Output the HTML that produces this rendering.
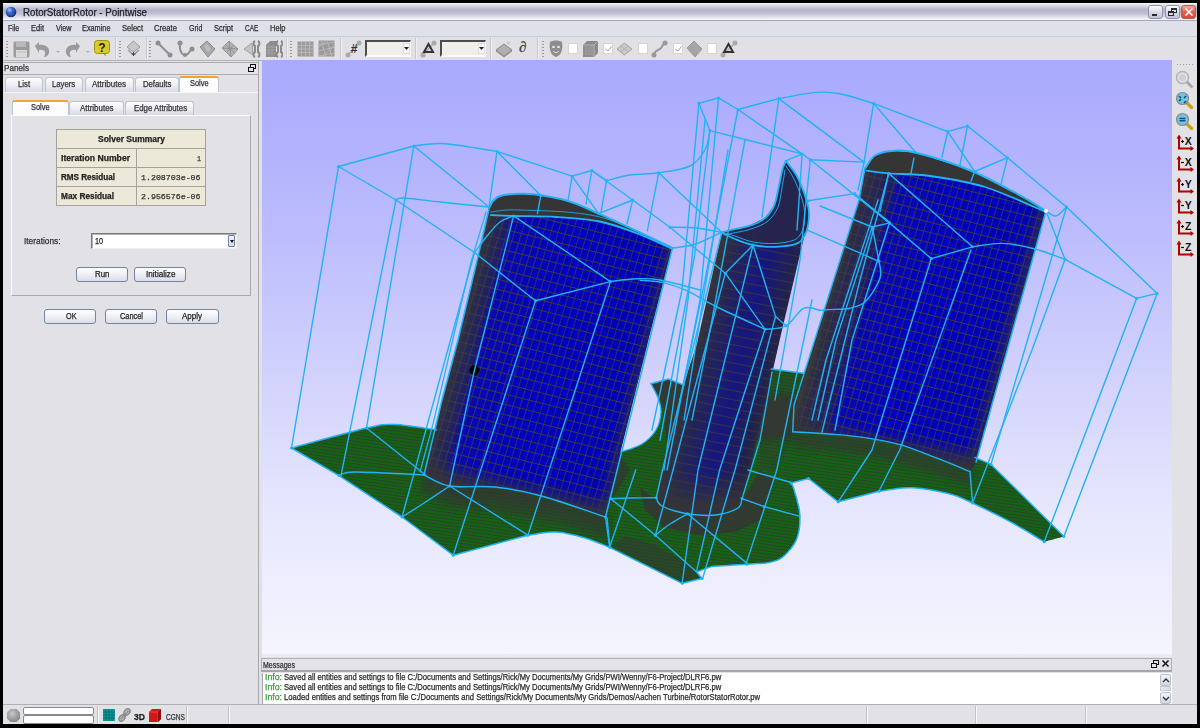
<!DOCTYPE html>
<html><head><meta charset="utf-8"><style>
*{margin:0;padding:0;box-sizing:border-box}
html,body{width:1200px;height:728px;overflow:hidden;background:#000;font-family:"Liberation Sans",sans-serif;font-size:11px;color:#000}
.a{position:absolute}
.t{position:absolute;white-space:nowrap;line-height:1;transform-origin:0 0;-webkit-text-stroke:0.25px currentColor}
.sep{position:absolute;width:2px;border-left:1px solid #c8c8ce;border-right:1px solid #f0f0f3}
.grip{position:absolute;width:2px;background:repeating-linear-gradient(#9a9a9a 0 1px,transparent 1px 3px)}
.tab{position:absolute;background:linear-gradient(#fdfdfe,#eeeef4 50%,#d9d9e5);border:1px solid #b9c5cc;border-bottom:none;border-radius:3px 3px 0 0}
.tab.sel{background:#fcfcfe;border-top:2px solid #f2a628}
.btn{position:absolute;background:linear-gradient(#ffffff,#f3f3f7 40%,#dcdce8);border:1px solid #7185a2;border-radius:3px}
.cb{position:absolute;width:10px;height:11px;background:#fff;border:1px solid #d6d4ca}
</style></head><body>
<div class="a" style="left:3px;top:3px;width:1194px;height:721px;background:#e2e1e6"></div>
<div class="a" style="left:3px;top:3px;width:1194px;height:17px;background:linear-gradient(#f7f7fb 0%,#dadae5 15%,#b5b4ca 40%,#c0bfd3 62%,#e4e4ee 85%,#f7f7fb 100%)"></div>
<div class="a" style="left:3px;top:20px;width:1194px;height:1px;background:#a7a6ba"></div>
<svg class="a" style="left:4px;top:5px" width="14" height="14" viewBox="0 0 14 14"><defs><radialGradient id="gl" cx="35%" cy="30%" r="75%"><stop offset="0" stop-color="#a8c8ff"/><stop offset=".4" stop-color="#3163c8"/><stop offset="1" stop-color="#0c2778"/></radialGradient></defs><circle cx="7" cy="7" r="5.3" fill="url(#gl)"/><path d="M3 6h8M3.5 9h7M7 2v10" stroke="#6d92dd" stroke-width=".5" fill="none" opacity=".7"/></svg>
<div class="a" style="left:1148px;top:5px;width:15px;height:14px;border:1px solid #8f91aa;border-radius:3px;background:linear-gradient(#fcfcfe,#d6d7e4 55%,#c3c4d6)"><div class="a" style="left:3px;top:8px;width:5px;height:2px;background:#2a2a2a"></div></div>
<div class="a" style="left:1165px;top:5px;width:15px;height:14px;border:1px solid #8f91aa;border-radius:3px;background:linear-gradient(#fcfcfe,#d6d7e4 55%,#c3c4d6)"><div class="a" style="left:5px;top:2px;width:6px;height:5px;border:1px solid #2a2a2a;border-top-width:2px"></div><div class="a" style="left:2px;top:5px;width:6px;height:5px;border:1px solid #2a2a2a;border-top-width:2px;background:#d8d9e6"></div></div>
<div class="a" style="left:1181px;top:5px;width:15px;height:14px;border:1px solid #b65a4f;border-radius:3px;background:linear-gradient(#f2ab9e,#e06655 45%,#d24c3c)"><svg class="a" style="left:2px;top:1px" width="10" height="10"><path d="M1.5 1.5L8.5 8.5M8.5 1.5L1.5 8.5" stroke="#fff" stroke-width="1.5"/></svg></div>
<div class="a" style="left:3px;top:21px;width:1194px;height:15px;background:#dfe1ea"></div>
<div class="a" style="left:3px;top:36px;width:1194px;height:1px;background:#cacad2"></div>
<div class="a" style="left:3px;top:37px;width:1194px;height:23px;background:#e1e0e5"></div>
<div class="a" style="left:3px;top:60px;width:1194px;height:1px;background:#b3b3b8"></div>
<div class="sep" style="left:115px;top:38px;height:21px"></div>
<div class="sep" style="left:145.5px;top:38px;height:21px"></div>
<div class="sep" style="left:286px;top:38px;height:21px"></div>
<div class="sep" style="left:340px;top:38px;height:21px"></div>
<div class="sep" style="left:415px;top:38px;height:21px"></div>
<div class="sep" style="left:490px;top:38px;height:21px"></div>
<div class="sep" style="left:537px;top:38px;height:21px"></div>
<div class="grip" style="left:6px;top:41px;height:16px"></div>
<div class="grip" style="left:119px;top:41px;height:16px"></div>
<div class="grip" style="left:149px;top:41px;height:16px"></div>
<div class="grip" style="left:290px;top:41px;height:16px"></div>
<div class="grip" style="left:542px;top:41px;height:16px"></div>
<svg class="a" style="left:13px;top:41px" width="17" height="17" viewBox="0 0 17 17"><rect x="0.5" y="0.5" width="16" height="16" rx="1.5" fill="#9a9a9a"/><rect x="3" y="1" width="10" height="5" fill="#b8b8b8"/><rect x="3" y="9" width="11" height="7" fill="#dadada"/><rect x="4" y="10.5" width="9" height="1" fill="#bbb"/></svg>
<svg class="a" style="left:33px;top:41px" width="19" height="17" viewBox="0 0 19 17"><path d="M2 5 L6 1 V4 C13 3 17 7 16 12 C15 15 13 16 11 16 C13 13 13 8 6 9 V12 Z" fill="#9a9a9a"/></svg>
<svg class="a" style="left:56px;top:51px" width="4" height="3" viewBox="0 0 4 3"><path d="M0 0h4l-2 2z" fill="#aaa"/></svg>
<svg class="a" style="left:63px;top:41px" width="19" height="17" viewBox="0 0 19 17"><path d="M17 5 L13 1 V4 C6 3 2 7 3 12 C4 15 6 16 8 16 C6 13 6 8 13 9 V12 Z" fill="#9a9a9a"/></svg>
<svg class="a" style="left:86px;top:51px" width="4" height="3" viewBox="0 0 4 3"><path d="M0 0h4l-2 2z" fill="#aaa"/></svg>
<svg class="a" style="left:94px;top:40px" width="16" height="17" viewBox="0 0 16 17"><rect x="0.5" y="0.5" width="15" height="13" rx="3" fill="#d9cc2a" stroke="#9b8f14"/><path d="M9 13.5 L12 16.5 L11 13z" fill="#9b8f14"/><text x="8" y="11.5" font-family="Liberation Sans" font-weight="bold" font-size="12" text-anchor="middle" fill="#1e1a00">?</text></svg>
<svg class="a" style="left:126px;top:40px" width="15" height="18" viewBox="0 0 15 18"><path d="M7.5 1 L14 7 L7.5 12 L1 7z" fill="#c8c8c8" stroke="#9a9a9a"/><path d="M2 10 L7.5 15 L13 10" fill="none" stroke="#9a9a9a" stroke-width="1.5"/><path d="M7.5 12v4M5.5 14h4" stroke="#444" stroke-width="1"/></svg>
<svg class="a" style="left:155px;top:40px" width="18" height="18" viewBox="0 0 18 18"><path d="M3 3 L15 15" stroke="#8e8e8e" stroke-width="2"/><circle cx="3" cy="3" r="2.5" fill="#8e8e8e"/><circle cx="15" cy="15" r="2.5" fill="#8e8e8e"/></svg>
<svg class="a" style="left:177px;top:40px" width="18" height="18" viewBox="0 0 18 18"><path d="M3 3 C2 12 6 16 9 15 C12 14 13 10 15 9" stroke="#8e8e8e" stroke-width="2" fill="none"/><circle cx="3" cy="3" r="2.5" fill="#8e8e8e"/><circle cx="15" cy="9" r="2.5" fill="#8e8e8e"/><circle cx="8" cy="15" r="2" fill="#8e8e8e"/></svg>
<svg class="a" style="left:199px;top:40px" width="17" height="18" viewBox="0 0 17 18"><path d="M1 7 L8 1 L16 9 L9 17z" fill="#a8a8a8" stroke="#8a8a8a"/><path d="M5 7 L8 4 L12 9 L9 12z" fill="#bdbdbd"/></svg>
<svg class="a" style="left:221px;top:40px" width="18" height="18" viewBox="0 0 18 18"><path d="M1 8 L8 1 L17 9 L10 17z" fill="#b5b5b5" stroke="#909090"/><path d="M4.5 4.5 L13.5 13 M8 1 L10 17 M12.5 5 L5.5 12.5 M1 8 L17 9" stroke="#909090" stroke-width="1"/></svg>
<svg class="a" style="left:243px;top:40px" width="18" height="18" viewBox="0 0 18 18"><path d="M1 9 L9 3 L10 15z" fill="#c6c6c6" stroke="#a0a0a0"/><path d="M12 1 C10 2 10 5 12 6 V12 C10 13 10 16 12 17 M15 1 C17 2 17 5 15 6 V12 C17 13 17 16 15 17" stroke="#8a8a8a" stroke-width="2" fill="none"/></svg>
<svg class="a" style="left:265px;top:40px" width="18" height="18" viewBox="0 0 18 18"><path d="M1 5 L5 1 H11 V17 H1z" fill="#8c8c8c"/><path d="M1 7h10M1 10h10M1 13h10M4 5v12M7 5v12" stroke="#a9a9a9" stroke-width=".8"/><path d="M13 1 C11 2 11 5 13 6 V12 C11 13 11 16 13 17 M16 1 C18 2 18 5 16 6 V12 C18 13 18 16 16 17" stroke="#8a8a8a" stroke-width="2" fill="none"/></svg>
<svg class="a" style="left:297px;top:41px" width="17" height="16" viewBox="0 0 17 16"><rect x=".5" y=".5" width="16" height="15" fill="#9c9c9c"/><path d="M4.5 0v16M8.5 0v16M12.5 0v16M0 4.5h17M0 8h17M0 11.5h17" stroke="#b6b6b6" stroke-width="1"/></svg>
<svg class="a" style="left:318px;top:40px" width="17" height="17" viewBox="0 0 17 17"><rect x=".5" y=".5" width="16" height="16" fill="#9a9a9a"/><path d="M0 5L17 2M0 11L17 7M0 16L17 13M3 0L8 17M9 0L14 17M0 8L9 0M4 17L17 5" stroke="#bababa" stroke-width=".9"/></svg>
<svg class="a" style="left:345px;top:40px" width="17" height="18" viewBox="0 0 17 18"><circle cx="14" cy="3" r="2.5" fill="#aaa"/><circle cx="3" cy="15" r="2.5" fill="#aaa"/><path d="M3 15L14 3" stroke="#aaa" stroke-width="1.5"/><text x="9" y="13" font-family="Liberation Sans" font-weight="bold" font-size="12" text-anchor="middle" fill="#333">#</text></svg>
<div class="a" style="left:365px;top:40px;width:46px;height:17px;background:#efeee9;border:2px solid #4d4d4d;border-right:1px solid #f7f7f7;border-bottom:2px solid #fafafa"><div class="a" style="left:36px;top:1px;width:7px;height:11px;background:#f7f7f7;border:1px solid #ddd"></div><svg class="a" style="left:37px;top:5px" width="5" height="3"><path d="M0 0h5l-2.5 3z" fill="#222"/></svg></div>
<svg class="a" style="left:420px;top:40px" width="17" height="18" viewBox="0 0 17 18"><circle cx="14" cy="3" r="2.5" fill="#aaa"/><circle cx="3" cy="15" r="2.5" fill="#aaa"/><path d="M3 15L14 3" stroke="#aaa" stroke-width="1.5"/><path d="M8.5 4 L13 12 H4z" fill="none" stroke="#333" stroke-width="2"/></svg>
<div class="a" style="left:440px;top:40px;width:46px;height:17px;background:#efeee9;border:2px solid #4d4d4d;border-right:1px solid #f7f7f7;border-bottom:2px solid #fafafa"><div class="a" style="left:36px;top:1px;width:7px;height:11px;background:#f7f7f7;border:1px solid #ddd"></div><svg class="a" style="left:37px;top:5px" width="5" height="3"><path d="M0 0h5l-2.5 3z" fill="#222"/></svg></div>
<svg class="a" style="left:495px;top:40px" width="18" height="18" viewBox="0 0 18 18"><path d="M1 10 L9 4 L17 10 L9 16z" fill="#b0b0b0" stroke="#8a8a8a"/><path d="M1 11 L9 17 L17 11" fill="none" stroke="#8a8a8a"/><path d="M12 1 L14 5 M16 2 L12 4" stroke="#c0c0c0"/></svg>
<div class="t" style="left:519px;top:40px;font-size:15px;font-style:italic;font-family:'Liberation Serif';color:#3a3a3a;font-weight:bold">&#8706;</div>
<svg class="a" style="left:548px;top:40px" width="16" height="18" viewBox="0 0 16 18"><path d="M2 2 C5 0 11 0 14 2 C15 8 14 15 8 17 C2 15 1 8 2 2z" fill="#8d8d8d"/><ellipse cx="5.5" cy="7" rx="1.5" ry="1" fill="#eee"/><ellipse cx="10.5" cy="7" rx="1.5" ry="1" fill="#eee"/><path d="M5 11 C7 13 9 13 11 11" stroke="#eee" fill="none"/></svg>
<div class="cb" style="left:568px;top:43px"></div>
<svg class="a" style="left:582px;top:40px" width="17" height="18" viewBox="0 0 17 18"><path d="M1 5 L5 1 H16 V13 L12 17 H1z" fill="#8a8a8a"/><path d="M1 5H12V17M12 5L16 1" stroke="#b5b5b5" fill="none"/><path d="M1 8h11M1 11h11M1 14h11M4 5v12M7 5v12M10 5v12" stroke="#a5a5a5" stroke-width=".7"/></svg>
<div class="cb" style="left:603px;top:43px"><svg class="a" style="left:1px;top:2px" width="7" height="6"><path d="M.5 3L3 5L6.5 .5" stroke="#999" fill="none"/></svg></div>
<svg class="a" style="left:616px;top:42px" width="17" height="14" viewBox="0 0 17 14"><path d="M1 7 L8.5 1 L16 7 L8.5 13z" fill="#c9c9c9" stroke="#a5a5a5"/><path d="M4.75 4 L12.25 10 M12.25 4 L4.75 10" stroke="#b0b0b0"/></svg>
<div class="cb" style="left:638px;top:43px"></div>
<svg class="a" style="left:651px;top:40px" width="17" height="18" viewBox="0 0 17 18"><path d="M3 15 C4 9 8 11 10 8 C11 6 12 4 14 3" stroke="#999" stroke-width="2" fill="none"/><circle cx="14" cy="3" r="2.5" fill="#999"/><circle cx="3" cy="15" r="2.5" fill="#999"/></svg>
<div class="cb" style="left:673px;top:43px"><svg class="a" style="left:1px;top:2px" width="7" height="6"><path d="M.5 3L3 5L6.5 .5" stroke="#999" fill="none"/></svg></div>
<svg class="a" style="left:686px;top:40px" width="17" height="18" viewBox="0 0 17 18"><path d="M1 8 L8 1 L16 9 L9 17z" fill="#a5a5a5" stroke="#999"/></svg>
<div class="cb" style="left:707px;top:43px"></div>
<svg class="a" style="left:720px;top:40px" width="18" height="18" viewBox="0 0 18 18"><circle cx="15" cy="3" r="2.5" fill="#aaa"/><circle cx="3" cy="15" r="2.5" fill="#aaa"/><path d="M3 15L15 3" stroke="#aaa" stroke-width="1.5"/><path d="M8.5 4 L13 12 H4z" fill="none" stroke="#333" stroke-width="2"/></svg>
<div class="a" style="left:3px;top:61px;width:255px;height:643px;background:#e2e1e6"></div>
<div class="a" style="left:258px;top:61px;width:1px;height:643px;background:#a9a9ad"></div>
<div class="a" style="left:3px;top:62px;width:256px;height:13px;border:1px solid #acacb0;border-left:none;background:#e4e3e8"></div>
<svg class="a" style="left:248px;top:64px" width="8" height="8" viewBox="0 0 8 8"><rect x="2.5" y=".5" width="5" height="4" fill="none" stroke="#111"/><rect x=".5" y="3.5" width="5" height="4" fill="#e4e3e8" stroke="#111"/></svg>
<div class="tab" style="left:4.5px;top:77px;width:38.5px;height:15px"></div>
<div class="tab" style="left:44.5px;top:77px;width:38.5px;height:15px"></div>
<div class="tab" style="left:84.5px;top:77px;width:49.5px;height:15px"></div>
<div class="tab" style="left:135px;top:77px;width:43.5px;height:15px"></div>
<div class="tab sel" style="left:178.5px;top:76px;width:40px;height:17px"></div>
<div class="a" style="left:4px;top:92px;width:254px;height:612px;border-top:1px solid #f6f6f8"></div>
<div class="tab" style="left:69px;top:101px;width:55px;height:14px"></div>
<div class="tab" style="left:125px;top:101px;width:69px;height:14px"></div>
<div class="tab sel" style="left:12px;top:100px;width:57px;height:16px"></div>
<div class="a" style="left:11px;top:115px;width:240px;height:181px;border-left:1px solid #fafafa;border-top:1px solid #fafafa;border-right:1px solid #a9a9ad;border-bottom:1px solid #a9a9ad"></div>
<div class="a" style="left:56px;top:129px;width:150px;height:77px;background:#ece9d8;border:1px solid #a3a39d"></div>
<div class="a" style="left:57px;top:148px;width:148px;height:1px;background:#a3a39d"></div>
<div class="a" style="left:57px;top:167px;width:148px;height:1px;background:#a3a39d"></div>
<div class="a" style="left:57px;top:186px;width:148px;height:1px;background:#a3a39d"></div>
<div class="a" style="left:136px;top:148px;width:1px;height:58px;background:#a3a39d"></div>
<div class="a" style="left:91px;top:233px;width:146px;height:16px;background:#fff;border:1px solid #7a7a7a;border-right-color:#eee;border-bottom-color:#eee;box-shadow:inset 1px 1px 0 #b0b0b0"></div>
<div class="a" style="left:228px;top:235px;width:7px;height:12px;background:linear-gradient(#f4f5fb,#d8dbe8);border:1px solid #6f7f9a;border-radius:1px"><svg class="a" style="left:1px;top:4px" width="4" height="3"><path d="M0 0h4l-2 3z" fill="#111"/></svg></div>
<div class="btn" style="left:76px;top:266.5px;width:52px;height:15.5px"></div>
<div class="btn" style="left:134px;top:266.5px;width:52px;height:15.5px"></div>
<div class="btn" style="left:44px;top:308.5px;width:52px;height:15.5px"></div>
<div class="btn" style="left:105px;top:308.5px;width:52px;height:15.5px"></div>
<div class="btn" style="left:166px;top:308.5px;width:52.5px;height:15.5px"></div>
<div class="a" style="left:262px;top:60px;width:910px;height:594px;background:linear-gradient(#a9a9fe 0%,#b9b9fd 25%,#cfcffd 50%,#e6e6fe 75%,#f5f5fe 100%)"></div>
<svg class="a" style="left:262px;top:60px" width="910" height="594" viewBox="262 60 910 594"><defs>
<pattern id="gridB" patternUnits="userSpaceOnUse" width="7" height="10" patternTransform="matrix(0.97 0.242 -0.29 0.957 0 0)"><path d="M0 0.5H7" stroke="#3e3a3a" stroke-width="1" opacity="0.95"/><path d="M0.45 0V10" stroke="#3e3e4e" stroke-width="0.85" opacity="0.85"/></pattern>
<pattern id="gridS" patternUnits="userSpaceOnUse" width="5" height="9" patternTransform="rotate(11)"><path d="M0 0.4H5" stroke="#3a3a3a" stroke-width="1" opacity="0.9"/></pattern>
<pattern id="gridG" patternUnits="userSpaceOnUse" width="9" height="3.2" patternTransform="rotate(8)"><path d="M0 0.5H9" stroke="#333" stroke-width="1" opacity="0.7"/></pattern>
<linearGradient id="bl1" gradientUnits="userSpaceOnUse" x1="423" y1="475" x2="609" y2="521.5"><stop offset="0" stop-color="#363636"/><stop offset="0.035" stop-color="#2c2c48"/><stop offset="0.1" stop-color="#1e1e6a"/><stop offset="0.14" stop-color="#0808b0"/><stop offset="0.5" stop-color="#0000c0"/><stop offset="0.9" stop-color="#0000b6"/><stop offset="1" stop-color="#2c2c50"/></linearGradient>
<linearGradient id="bl2" gradientUnits="userSpaceOnUse" x1="690" y1="360" x2="785" y2="384"><stop offset="0" stop-color="#363636"/><stop offset="0.2" stop-color="#24245a"/><stop offset="0.5" stop-color="#161680"/><stop offset="0.8" stop-color="#22224c"/><stop offset="1" stop-color="#363636"/></linearGradient>
<linearGradient id="bl3" gradientUnits="userSpaceOnUse" x1="829" y1="300" x2="1011" y2="350"><stop offset="0" stop-color="#363636"/><stop offset="0.03" stop-color="#2c2c48"/><stop offset="0.16" stop-color="#1e1e66"/><stop offset="0.2" stop-color="#0808b0"/><stop offset="0.5" stop-color="#0000c0"/><stop offset="0.9" stop-color="#0000b6"/><stop offset="1" stop-color="#2c2c50"/></linearGradient>
<linearGradient id="bot1" gradientUnits="userSpaceOnUse" x1="519" y1="474" x2="514" y2="497"><stop offset="0" stop-color="#353535" stop-opacity="0"/><stop offset="1" stop-color="#353535" stop-opacity="0.95"/></linearGradient>
<linearGradient id="bot3" gradientUnits="userSpaceOnUse" x1="884" y1="428" x2="880" y2="451"><stop offset="0" stop-color="#353535" stop-opacity="0"/><stop offset="1" stop-color="#353535" stop-opacity="0.95"/></linearGradient>
<linearGradient id="bot2" gradientUnits="userSpaceOnUse" x1="0" y1="470" x2="0" y2="505"><stop offset="0" stop-color="#353535" stop-opacity="0"/><stop offset="1" stop-color="#353535" stop-opacity="0.9"/></linearGradient>
<filter id="fb" x="-10%" y="-10%" width="120%" height="120%"><feGaussianBlur stdDeviation="3"/></filter>
</defs>
<path d="M291.5,448.0 L291.5,448.0 L297.6,446.3 L306.1,444.0 L316.2,441.2 L327.2,438.2 L338.5,435.2 L349.3,432.3 L358.8,429.8 L366.5,428.0 L372.2,426.7 L376.6,425.8 L380.0,425.1 L382.8,424.7 L385.4,424.4 L388.0,424.4 L391.1,424.4 L395.0,424.5 L399.9,424.8 L405.5,425.4 L411.5,426.1 L417.6,427.0 L423.5,427.9 L428.8,428.8 L433.3,429.5 L436.6,430.0 L470.0,440.0 L600.0,446.0 L621.0,452.0 L622.7,451.4 L624.9,450.7 L627.6,449.8 L630.6,448.9 L633.7,447.8 L636.8,446.6 L639.6,445.3 L642.0,444.0 L644.1,442.6 L646.2,441.0 L648.2,439.4 L650.0,437.6 L651.7,435.8 L653.3,433.9 L654.7,432.0 L656.0,430.0 L657.1,427.9 L658.1,425.7 L658.9,423.4 L659.6,421.0 L660.1,418.6 L660.5,416.3 L660.8,414.1 L661.0,412.0 L661.0,410.1 L660.9,408.2 L660.6,406.5 L660.2,404.8 L659.8,403.1 L659.2,401.4 L658.6,399.7 L658.0,398.0 L657.3,396.1 L656.4,394.1 L655.4,392.0 L654.3,390.0 L653.3,388.0 L652.4,386.3 L651.6,384.8 L651.0,383.7 L668.5,379.0 L684.3,385.3 L720.0,390.0 L760.0,378.0 L771.2,369.0 L803.2,373.3 L830.0,410.0 L960.0,440.0 L974.8,457.4 L991.0,464.4 L1063.9,536.4 L1044.2,541.8 L1044.2,541.8 L1041.5,540.2 L1038.0,538.1 L1033.8,535.5 L1029.2,532.7 L1024.2,529.7 L1019.2,526.8 L1014.2,523.9 L1009.5,521.3 L1004.7,518.8 L999.5,516.1 L994.2,513.5 L988.8,510.9 L983.8,508.4 L979.2,506.2 L975.4,504.4 L972.5,503.0 L970.9,502.3 L968.8,501.3 L966.4,500.2 L963.6,498.9 L960.6,497.6 L957.3,496.3 L953.7,495.1 L950.0,494.0 L945.9,493.0 L941.4,492.0 L936.6,491.0 L931.5,490.1 L926.4,489.3 L921.3,488.6 L916.4,488.1 L911.8,487.8 L907.2,487.8 L902.5,488.1 L897.7,488.6 L893.0,489.2 L888.7,489.8 L884.8,490.4 L881.5,491.0 L879.0,491.3 L838.2,501.8 L808.6,478.5 L791.0,482.9 L791.2,483.4 L791.5,483.9 L791.9,484.5 L792.3,485.2 L792.8,486.1 L793.2,487.3 L793.8,488.7 L794.3,490.5 L794.9,492.7 L795.7,495.4 L796.6,498.4 L797.4,501.6 L798.2,505.0 L799.0,508.3 L799.5,511.6 L799.8,514.7 L799.9,517.7 L799.9,520.7 L799.8,523.8 L799.5,526.8 L799.1,529.8 L798.5,532.6 L797.8,535.4 L797.0,538.0 L796.0,540.5 L794.7,542.9 L793.3,545.3 L791.7,547.5 L790.0,549.6 L788.3,551.6 L786.6,553.4 L785.0,555.0 L783.4,556.4 L781.9,557.6 L780.4,558.6 L778.9,559.4 L777.2,560.2 L775.4,560.8 L773.4,561.4 L771.2,562.0 L768.7,562.5 L766.1,562.9 L763.4,563.2 L760.4,563.4 L757.3,563.6 L754.1,563.8 L750.6,564.0 L747.0,564.2 L742.9,564.5 L738.2,564.8 L733.1,565.1 L727.9,565.4 L723.0,565.7 L718.5,566.0 L714.7,566.2 L711.9,566.4 L696.5,571.9 L702.0,578.5 L682.2,583.3 L609.7,547.3 L609.7,547.3 L607.6,546.5 L604.9,545.4 L601.7,544.1 L598.1,542.7 L594.3,541.2 L590.4,539.8 L586.6,538.5 L583.0,537.4 L579.6,536.5 L576.2,535.5 L572.7,534.7 L569.2,533.9 L565.8,533.2 L562.3,532.6 L558.9,532.2 L555.4,532.0 L551.8,532.0 L547.9,532.3 L543.9,532.7 L539.9,533.3 L536.2,533.9 L532.8,534.4 L530.0,534.9 L527.9,535.2 L453.2,555.2 L402.0,517.0 L339.0,475.6 Z" fill="#146314" />
<path d="M291.5,448.0 L291.5,448.0 L297.6,446.3 L306.1,444.0 L316.2,441.2 L327.2,438.2 L338.5,435.2 L349.3,432.3 L358.8,429.8 L366.5,428.0 L372.2,426.7 L376.6,425.8 L380.0,425.1 L382.8,424.7 L385.4,424.4 L388.0,424.4 L391.1,424.4 L395.0,424.5 L399.9,424.8 L405.5,425.4 L411.5,426.1 L417.6,427.0 L423.5,427.9 L428.8,428.8 L433.3,429.5 L436.6,430.0 L470.0,440.0 L600.0,446.0 L621.0,452.0 L622.7,451.4 L624.9,450.7 L627.6,449.8 L630.6,448.9 L633.7,447.8 L636.8,446.6 L639.6,445.3 L642.0,444.0 L644.1,442.6 L646.2,441.0 L648.2,439.4 L650.0,437.6 L651.7,435.8 L653.3,433.9 L654.7,432.0 L656.0,430.0 L657.1,427.9 L658.1,425.7 L658.9,423.4 L659.6,421.0 L660.1,418.6 L660.5,416.3 L660.8,414.1 L661.0,412.0 L661.0,410.1 L660.9,408.2 L660.6,406.5 L660.2,404.8 L659.8,403.1 L659.2,401.4 L658.6,399.7 L658.0,398.0 L657.3,396.1 L656.4,394.1 L655.4,392.0 L654.3,390.0 L653.3,388.0 L652.4,386.3 L651.6,384.8 L651.0,383.7 L668.5,379.0 L684.3,385.3 L720.0,390.0 L760.0,378.0 L771.2,369.0 L803.2,373.3 L830.0,410.0 L960.0,440.0 L974.8,457.4 L991.0,464.4 L1063.9,536.4 L1044.2,541.8 L1044.2,541.8 L1041.5,540.2 L1038.0,538.1 L1033.8,535.5 L1029.2,532.7 L1024.2,529.7 L1019.2,526.8 L1014.2,523.9 L1009.5,521.3 L1004.7,518.8 L999.5,516.1 L994.2,513.5 L988.8,510.9 L983.8,508.4 L979.2,506.2 L975.4,504.4 L972.5,503.0 L970.9,502.3 L968.8,501.3 L966.4,500.2 L963.6,498.9 L960.6,497.6 L957.3,496.3 L953.7,495.1 L950.0,494.0 L945.9,493.0 L941.4,492.0 L936.6,491.0 L931.5,490.1 L926.4,489.3 L921.3,488.6 L916.4,488.1 L911.8,487.8 L907.2,487.8 L902.5,488.1 L897.7,488.6 L893.0,489.2 L888.7,489.8 L884.8,490.4 L881.5,491.0 L879.0,491.3 L838.2,501.8 L808.6,478.5 L791.0,482.9 L791.2,483.4 L791.5,483.9 L791.9,484.5 L792.3,485.2 L792.8,486.1 L793.2,487.3 L793.8,488.7 L794.3,490.5 L794.9,492.7 L795.7,495.4 L796.6,498.4 L797.4,501.6 L798.2,505.0 L799.0,508.3 L799.5,511.6 L799.8,514.7 L799.9,517.7 L799.9,520.7 L799.8,523.8 L799.5,526.8 L799.1,529.8 L798.5,532.6 L797.8,535.4 L797.0,538.0 L796.0,540.5 L794.7,542.9 L793.3,545.3 L791.7,547.5 L790.0,549.6 L788.3,551.6 L786.6,553.4 L785.0,555.0 L783.4,556.4 L781.9,557.6 L780.4,558.6 L778.9,559.4 L777.2,560.2 L775.4,560.8 L773.4,561.4 L771.2,562.0 L768.7,562.5 L766.1,562.9 L763.4,563.2 L760.4,563.4 L757.3,563.6 L754.1,563.8 L750.6,564.0 L747.0,564.2 L742.9,564.5 L738.2,564.8 L733.1,565.1 L727.9,565.4 L723.0,565.7 L718.5,566.0 L714.7,566.2 L711.9,566.4 L696.5,571.9 L702.0,578.5 L682.2,583.3 L609.7,547.3 L609.7,547.3 L607.6,546.5 L604.9,545.4 L601.7,544.1 L598.1,542.7 L594.3,541.2 L590.4,539.8 L586.6,538.5 L583.0,537.4 L579.6,536.5 L576.2,535.5 L572.7,534.7 L569.2,533.9 L565.8,533.2 L562.3,532.6 L558.9,532.2 L555.4,532.0 L551.8,532.0 L547.9,532.3 L543.9,532.7 L539.9,533.3 L536.2,533.9 L532.8,534.4 L530.0,534.9 L527.9,535.2 L453.2,555.2 L402.0,517.0 L339.0,475.6 Z" fill="url(#gridG)" />
<clipPath id="cfl"><path d="M291.5,448.0 L291.5,448.0 L297.6,446.3 L306.1,444.0 L316.2,441.2 L327.2,438.2 L338.5,435.2 L349.3,432.3 L358.8,429.8 L366.5,428.0 L372.2,426.7 L376.6,425.8 L380.0,425.1 L382.8,424.7 L385.4,424.4 L388.0,424.4 L391.1,424.4 L395.0,424.5 L399.9,424.8 L405.5,425.4 L411.5,426.1 L417.6,427.0 L423.5,427.9 L428.8,428.8 L433.3,429.5 L436.6,430.0 L470.0,440.0 L600.0,446.0 L621.0,452.0 L622.7,451.4 L624.9,450.7 L627.6,449.8 L630.6,448.9 L633.7,447.8 L636.8,446.6 L639.6,445.3 L642.0,444.0 L644.1,442.6 L646.2,441.0 L648.2,439.4 L650.0,437.6 L651.7,435.8 L653.3,433.9 L654.7,432.0 L656.0,430.0 L657.1,427.9 L658.1,425.7 L658.9,423.4 L659.6,421.0 L660.1,418.6 L660.5,416.3 L660.8,414.1 L661.0,412.0 L661.0,410.1 L660.9,408.2 L660.6,406.5 L660.2,404.8 L659.8,403.1 L659.2,401.4 L658.6,399.7 L658.0,398.0 L657.3,396.1 L656.4,394.1 L655.4,392.0 L654.3,390.0 L653.3,388.0 L652.4,386.3 L651.6,384.8 L651.0,383.7 L668.5,379.0 L684.3,385.3 L720.0,390.0 L760.0,378.0 L771.2,369.0 L803.2,373.3 L830.0,410.0 L960.0,440.0 L974.8,457.4 L991.0,464.4 L1063.9,536.4 L1044.2,541.8 L1044.2,541.8 L1041.5,540.2 L1038.0,538.1 L1033.8,535.5 L1029.2,532.7 L1024.2,529.7 L1019.2,526.8 L1014.2,523.9 L1009.5,521.3 L1004.7,518.8 L999.5,516.1 L994.2,513.5 L988.8,510.9 L983.8,508.4 L979.2,506.2 L975.4,504.4 L972.5,503.0 L970.9,502.3 L968.8,501.3 L966.4,500.2 L963.6,498.9 L960.6,497.6 L957.3,496.3 L953.7,495.1 L950.0,494.0 L945.9,493.0 L941.4,492.0 L936.6,491.0 L931.5,490.1 L926.4,489.3 L921.3,488.6 L916.4,488.1 L911.8,487.8 L907.2,487.8 L902.5,488.1 L897.7,488.6 L893.0,489.2 L888.7,489.8 L884.8,490.4 L881.5,491.0 L879.0,491.3 L838.2,501.8 L808.6,478.5 L791.0,482.9 L791.2,483.4 L791.5,483.9 L791.9,484.5 L792.3,485.2 L792.8,486.1 L793.2,487.3 L793.8,488.7 L794.3,490.5 L794.9,492.7 L795.7,495.4 L796.6,498.4 L797.4,501.6 L798.2,505.0 L799.0,508.3 L799.5,511.6 L799.8,514.7 L799.9,517.7 L799.9,520.7 L799.8,523.8 L799.5,526.8 L799.1,529.8 L798.5,532.6 L797.8,535.4 L797.0,538.0 L796.0,540.5 L794.7,542.9 L793.3,545.3 L791.7,547.5 L790.0,549.6 L788.3,551.6 L786.6,553.4 L785.0,555.0 L783.4,556.4 L781.9,557.6 L780.4,558.6 L778.9,559.4 L777.2,560.2 L775.4,560.8 L773.4,561.4 L771.2,562.0 L768.7,562.5 L766.1,562.9 L763.4,563.2 L760.4,563.4 L757.3,563.6 L754.1,563.8 L750.6,564.0 L747.0,564.2 L742.9,564.5 L738.2,564.8 L733.1,565.1 L727.9,565.4 L723.0,565.7 L718.5,566.0 L714.7,566.2 L711.9,566.4 L696.5,571.9 L702.0,578.5 L682.2,583.3 L609.7,547.3 L609.7,547.3 L607.6,546.5 L604.9,545.4 L601.7,544.1 L598.1,542.7 L594.3,541.2 L590.4,539.8 L586.6,538.5 L583.0,537.4 L579.6,536.5 L576.2,535.5 L572.7,534.7 L569.2,533.9 L565.8,533.2 L562.3,532.6 L558.9,532.2 L555.4,532.0 L551.8,532.0 L547.9,532.3 L543.9,532.7 L539.9,533.3 L536.2,533.9 L532.8,534.4 L530.0,534.9 L527.9,535.2 L453.2,555.2 L402.0,517.0 L339.0,475.6 Z"/></clipPath>
<g clip-path="url(#cfl)">
<path d="M651.0,384.0 L668.0,379.0 L684.0,385.0 L700.0,390.0 L690.0,440.0 L672.0,470.0 L665.0,430.0 L665.5,412.0 L659.0,396.0 Z" fill="#353535" opacity="0.9"/>
<path d="M606.0,455.0 L619.0,452.0 L630.0,470.0 L612.0,500.0 L606.0,517.0 Z" fill="#353535" opacity="0.7"/>
<path d="M640.0,488.0 L656.0,500.0 L676.0,511.0 L700.0,515.5 L725.0,513.0 L742.0,500.0 L760.0,470.0 L775.0,480.0 L760.0,520.0 L735.0,532.0 L700.0,535.0 L665.0,528.0 L645.0,510.0 Z" fill="#353535" opacity="0.85"/>
<path d="M612.0,546.0 L682.0,583.0 L700.0,578.0 L690.0,565.0 L655.0,545.0 L625.0,536.0 Z" fill="#353535" opacity="0.55"/>
<path d="M760.0,378.0 L771.0,369.0 L790.0,372.0 L803.0,373.0 L795.0,420.0 L792.0,440.0 L775.0,470.0 L760.0,470.0 Z" fill="#353535" opacity="0.3"/>
<path d="M752.0,396.0 L797.0,394.0 L795.0,420.0 L792.0,438.0 L752.0,440.0 Z" fill="#353535" opacity="0.85" filter="url(#fb)"/>
<path d="M424.0,475.0 L449.6,486.0 L495.0,487.0 L541.6,496.0 L605.5,517.0 L609.0,540.0 L560.0,524.0 L500.0,512.0 L452.0,508.0 L420.0,492.0 Z" fill="#353535" opacity="0.55" filter="url(#fb)"/>
<path d="M424.0,475.0 L449.6,486.0 L495.0,487.0 L541.6,496.0 L605.5,517.0 L607.0,527.0 L560.0,510.0 L500.0,499.0 L452.0,497.0 L430.0,486.0 Z" fill="#353535" opacity="0.6" filter="url(#fb)"/>
<path d="M792.7,431.7 L830.0,434.0 L865.0,437.6 L900.0,444.6 L935.0,457.4 L972.0,471.4 L972.0,486.0 L930.0,472.0 L880.0,458.0 L830.0,450.0 L795.0,448.0 Z" fill="#353535" opacity="0.6" filter="url(#fb)"/>
</g>
<path d="M489.0,208.0 L493.0,201.0 L500.0,196.0 L515.0,194.0 L534.0,194.3 L568.0,201.0 L598.6,213.6 L636.0,230.6 L672.4,248.0 L651.0,330.0 L621.0,450.0 L605.5,517.0 L570.0,505.0 L541.6,496.0 L495.0,487.0 L449.6,486.0 L424.0,475.0 L442.0,400.0 L458.0,340.0 L476.0,265.0 Z" fill="url(#bl1)" />
<path d="M489.0,208.0 L493.0,201.0 L500.0,196.0 L515.0,194.0 L534.0,194.3 L568.0,201.0 L598.6,213.6 L636.0,230.6 L672.4,248.0 L651.0,330.0 L621.0,450.0 L605.5,517.0 L570.0,505.0 L541.6,496.0 L495.0,487.0 L449.6,486.0 L424.0,475.0 L442.0,400.0 L458.0,340.0 L476.0,265.0 Z" fill="url(#gridB)" />
<path d="M489.0,208.0 L493.0,201.0 L500.0,196.0 L515.0,194.0 L534.0,194.3 L568.0,201.0 L598.6,213.6 L636.0,230.6 L672.4,248.0 L651.0,330.0 L621.0,450.0 L605.5,517.0 L570.0,505.0 L541.6,496.0 L495.0,487.0 L449.6,486.0 L424.0,475.0 L442.0,400.0 L458.0,340.0 L476.0,265.0 Z" fill="url(#bot1)" />
<path d="M489.0,208.0 L493.0,201.0 L500.0,196.0 L515.0,194.0 L534.0,194.3 L568.0,201.0 L598.6,213.6 L636.0,230.6 L672.4,248.0 L636.0,233.0 L599.8,221.5 L556.7,217.0 L513.6,216.0 L491.0,215.0 Z" fill="#353535" />
<path d="M786.5,161.0 L796.7,175.7 L805.0,195.4 L808.8,210.5 L808.0,225.6 L804.3,236.2 L782.0,330.0 L750.0,470.0 L742.0,500.0 L725.0,513.0 L700.0,515.5 L676.0,511.0 L656.0,500.0 L672.0,420.0 L697.0,343.6 L721.8,232.4 L730.2,230.1 L749.9,225.6 L765.0,218.0 L774.0,206.0 L778.6,187.8 L782.4,169.7 Z" fill="url(#bl2)" />
<path d="M786.5,161.0 L796.7,175.7 L805.0,195.4 L808.8,210.5 L808.0,225.6 L804.3,236.2 L782.0,330.0 L750.0,470.0 L742.0,500.0 L725.0,513.0 L700.0,515.5 L676.0,511.0 L656.0,500.0 L672.0,420.0 L697.0,343.6 L721.8,232.4 L730.2,230.1 L749.9,225.6 L765.0,218.0 L774.0,206.0 L778.6,187.8 L782.4,169.7 Z" fill="url(#gridS)" />
<path d="M786.5,161.0 L796.7,175.7 L805.0,195.4 L808.8,210.5 L808.0,225.6 L804.3,236.2 L782.0,330.0 L750.0,470.0 L742.0,500.0 L725.0,513.0 L700.0,515.5 L676.0,511.0 L656.0,500.0 L672.0,420.0 L697.0,343.6 L721.8,232.4 L730.2,230.1 L749.9,225.6 L765.0,218.0 L774.0,206.0 L778.6,187.8 L782.4,169.7 Z" fill="url(#bot2)" />
<path d="M786.5,161.0 L796.7,175.7 L805.0,195.4 L808.8,210.5 L808.0,225.6 L804.3,236.2 L796.7,243.7 L775.6,246.8 L752.9,245.2 L735.0,239.0 L721.8,232.4 L730.2,230.1 L749.9,225.6 L765.0,218.0 L774.0,206.0 L778.6,187.8 L782.4,169.7 Z" fill="#26264a" opacity="0.9"/>
<path d="M865.3,168.0 L875.0,155.5 L891.4,150.9 L916.0,152.8 L971.0,170.7 L1020.0,195.4 L1046.0,211.0 L1010.0,340.0 L976.0,462.0 L971.0,471.4 L935.0,457.4 L900.0,444.6 L865.0,437.6 L830.0,434.0 L792.7,431.7 L794.0,405.0 L808.4,360.0 L859.0,200.0 L862.0,185.0 Z" fill="url(#bl3)" />
<path d="M865.3,168.0 L875.0,155.5 L891.4,150.9 L916.0,152.8 L971.0,170.7 L1020.0,195.4 L1046.0,211.0 L1010.0,340.0 L976.0,462.0 L971.0,471.4 L935.0,457.4 L900.0,444.6 L865.0,437.6 L830.0,434.0 L792.7,431.7 L794.0,405.0 L808.4,360.0 L859.0,200.0 L862.0,185.0 Z" fill="url(#gridB)" />
<path d="M865.3,168.0 L875.0,155.5 L891.4,150.9 L916.0,152.8 L971.0,170.7 L1020.0,195.4 L1046.0,211.0 L1010.0,340.0 L976.0,462.0 L971.0,471.4 L935.0,457.4 L900.0,444.6 L865.0,437.6 L830.0,434.0 L792.7,431.7 L794.0,405.0 L808.4,360.0 L859.0,200.0 L862.0,185.0 Z" fill="url(#bot3)" />
<path d="M865.3,168.0 L875.0,155.5 L891.4,150.9 L916.0,152.8 L971.0,170.7 L1020.0,195.4 L1046.0,211.0 L1020.0,201.0 L985.0,187.0 L930.0,176.0 L888.7,173.4 L866.7,170.7 Z" fill="#353535" />
<circle cx="474.5" cy="370.3" r="5" fill="#000"/>
<path d="M338.5,166.5 L413.8,146.0" fill="none" stroke="#22b2f6" stroke-width="1.4" stroke-linejoin="round" stroke-linecap="round" opacity="1"/>
<path d="M338.5,166.5 L396.0,200.0 L474.5,252.5 L535.5,300.8 L610.5,281.6" fill="none" stroke="#22b2f6" stroke-width="1.4" stroke-linejoin="round" stroke-linecap="round" opacity="1"/>
<path d="M338.5,166.5 L291.5,448.0" fill="none" stroke="#22b2f6" stroke-width="1.4" stroke-linejoin="round" stroke-linecap="round" opacity="1"/>
<path d="M396.0,200.0 L341.0,475.6" fill="none" stroke="#22b2f6" stroke-width="1.4" stroke-linejoin="round" stroke-linecap="round" opacity="1"/>
<path d="M413.8,146.0 L366.5,428.0" fill="none" stroke="#22b2f6" stroke-width="1.4" stroke-linejoin="round" stroke-linecap="round" opacity="1"/>
<path d="M474.5,252.5 L402.0,517.0" fill="none" stroke="#22b2f6" stroke-width="1.4" stroke-linejoin="round" stroke-linecap="round" opacity="1"/>
<path d="M413.8,146.0 C419.0,145.6 431.1,142.8 445.0,143.7 C458.9,144.6 488.3,150.1 497.0,151.4" fill="none" stroke="#22b2f6" stroke-width="1.4" stroke-linejoin="round" stroke-linecap="round" opacity="1"/>
<path d="M497.0,151.4 L572.1,176.2 L591.8,170.5 L606.6,180.7" fill="none" stroke="#22b2f6" stroke-width="1.4" stroke-linejoin="round" stroke-linecap="round" opacity="1"/>
<path d="M606.6,180.7 C610.5,179.8 621.3,176.3 630.0,175.0 C638.7,173.7 648.7,174.3 658.7,172.8 C668.7,171.3 682.3,169.8 690.0,166.0 C697.7,162.2 701.7,155.9 705.0,150.0 C708.3,144.1 709.1,133.8 709.9,130.6" fill="none" stroke="#22b2f6" stroke-width="1.4" stroke-linejoin="round" stroke-linecap="round" opacity="1"/>
<path d="M413.8,146.0 L489.0,207.0" fill="none" stroke="#22b2f6" stroke-width="1.4" stroke-linejoin="round" stroke-linecap="round" opacity="1"/>
<path d="M396.0,200.0 C397.3,199.7 396.3,197.7 403.6,198.0 C410.9,198.3 425.8,200.5 440.0,202.0 C454.2,203.5 480.8,206.2 489.0,207.0" fill="none" stroke="#22b2f6" stroke-width="1.4" stroke-linejoin="round" stroke-linecap="round" opacity="1"/>
<path d="M474.5,252.5 C476.6,249.8 482.8,241.1 487.0,236.0 C491.2,230.9 495.6,225.3 500.0,222.0 C504.4,218.7 511.3,216.9 513.6,215.9" fill="none" stroke="#22b2f6" stroke-width="1.4" stroke-linejoin="round" stroke-linecap="round" opacity="1"/>
<path d="M497.0,151.4 L489.0,207.0" fill="none" stroke="#22b2f6" stroke-width="1.4" stroke-linejoin="round" stroke-linecap="round" opacity="1"/>
<path d="M497.0,151.4 L540.8,195.4" fill="none" stroke="#22b2f6" stroke-width="1.4" stroke-linejoin="round" stroke-linecap="round" opacity="1"/>
<path d="M540.8,195.4 L537.4,213.6" fill="none" stroke="#22b2f6" stroke-width="1.4" stroke-linejoin="round" stroke-linecap="round" opacity="1"/>
<path d="M572.1,176.2 L568.0,201.0" fill="none" stroke="#22b2f6" stroke-width="1.4" stroke-linejoin="round" stroke-linecap="round" opacity="1"/>
<path d="M591.8,170.5 L586.0,204.0" fill="none" stroke="#22b2f6" stroke-width="1.4" stroke-linejoin="round" stroke-linecap="round" opacity="1"/>
<path d="M606.6,180.7 L601.0,212.5" fill="none" stroke="#22b2f6" stroke-width="1.4" stroke-linejoin="round" stroke-linecap="round" opacity="1"/>
<path d="M572.1,176.2 L598.6,213.6 L632.7,200.0" fill="none" stroke="#22b2f6" stroke-width="1.4" stroke-linejoin="round" stroke-linecap="round" opacity="1"/>
<path d="M591.8,170.5 L632.7,200.0 L670.0,227.2 L691.6,245.3" fill="none" stroke="#22b2f6" stroke-width="1.4" stroke-linejoin="round" stroke-linecap="round" opacity="1"/>
<path d="M632.7,200.0 L627.0,223.8" fill="none" stroke="#22b2f6" stroke-width="1.4" stroke-linejoin="round" stroke-linecap="round" opacity="1"/>
<path d="M658.7,172.8 L647.4,230.6" fill="none" stroke="#22b2f6" stroke-width="1.4" stroke-linejoin="round" stroke-linecap="round" opacity="1"/>
<path d="M658.7,172.8 L721.8,232.4" fill="none" stroke="#22b2f6" stroke-width="1.4" stroke-linejoin="round" stroke-linecap="round" opacity="1"/>
<path d="M489.0,208.0 C489.7,206.8 491.2,203.0 493.0,201.0 C494.8,199.0 496.3,197.2 500.0,196.0 C503.7,194.8 509.3,194.3 515.0,194.0 C520.7,193.7 525.2,193.1 534.0,194.3 C542.8,195.5 557.2,197.8 568.0,201.0 C578.8,204.2 587.3,208.7 598.6,213.6 C609.9,218.5 623.7,224.9 636.0,230.6 C648.3,236.3 666.3,245.1 672.4,248.0" fill="none" stroke="#22b2f6" stroke-width="2" stroke-linejoin="round" stroke-linecap="round" opacity="1"/>
<path d="M491.0,215.0 C494.8,215.2 502.7,215.7 513.6,216.0 C524.6,216.3 542.3,216.1 556.7,217.0 C571.1,217.9 586.6,218.8 599.8,221.5 C613.0,224.2 623.9,228.4 636.0,233.0 C648.1,237.6 666.3,246.3 672.4,249.0" fill="none" stroke="#22b2f6" stroke-width="1.8" stroke-linejoin="round" stroke-linecap="round" opacity="1"/>
<path d="M491.0,212.0 C495.8,211.7 501.8,209.2 520.0,210.0 C538.2,210.8 574.7,210.7 600.0,217.0 C625.3,223.3 660.0,242.8 672.0,248.0" fill="none" stroke="#22b2f6" stroke-width="1" stroke-linejoin="round" stroke-linecap="round" opacity="0.8"/>
<path d="M513.6,215.9 L474.0,372.0 L449.6,486.0" fill="none" stroke="#22b2f6" stroke-width="1.4" stroke-linejoin="round" stroke-linecap="round" opacity="1"/>
<path d="M513.6,215.9 L610.5,281.6" fill="none" stroke="#22b2f6" stroke-width="1.4" stroke-linejoin="round" stroke-linecap="round" opacity="1"/>
<path d="M610.5,281.6 C614.8,281.1 627.8,279.1 636.0,278.8 C644.2,278.5 649.3,278.1 660.0,280.0 C670.7,281.9 693.3,288.3 700.0,290.0" fill="none" stroke="#22b2f6" stroke-width="1.4" stroke-linejoin="round" stroke-linecap="round" opacity="1"/>
<path d="M535.5,300.8 L453.2,555.2" fill="none" stroke="#22b2f6" stroke-width="1.4" stroke-linejoin="round" stroke-linecap="round" opacity="1"/>
<path d="M610.5,281.6 L527.9,535.2" fill="none" stroke="#22b2f6" stroke-width="1.4" stroke-linejoin="round" stroke-linecap="round" opacity="1"/>
<path d="M672.4,248.0 L605.5,517.0" fill="none" stroke="#22b2f6" stroke-width="1.5" stroke-linejoin="round" stroke-linecap="round" opacity="1"/>
<path d="M489.0,209.0 L476.0,265.0 L458.0,340.0 L442.0,400.0 L424.0,475.0" fill="none" stroke="#22b2f6" stroke-width="1.5" stroke-linejoin="round" stroke-linecap="round" opacity="1"/>
<path d="M486.0,212.0 L471.0,262.0 L433.0,424.0 L420.0,472.0" fill="none" stroke="#22b2f6" stroke-width="1.2" stroke-linejoin="round" stroke-linecap="round" opacity="1"/>
<path d="M424.0,475.0 C428.3,476.8 437.8,484.0 449.6,486.0 C461.4,488.0 479.7,485.3 495.0,487.0 C510.3,488.7 523.2,491.0 541.6,496.0 C560.0,501.0 594.9,513.5 605.5,517.0" fill="none" stroke="#22b2f6" stroke-width="1.4" stroke-linejoin="round" stroke-linecap="round" opacity="1"/>
<path d="M449.6,486.0 L527.9,535.2" fill="none" stroke="#22b2f6" stroke-width="1.4" stroke-linejoin="round" stroke-linecap="round" opacity="1"/>
<path d="M1044.2,541.8 L1044.2,541.8 L1041.5,540.2 L1038.0,538.1 L1033.8,535.5 L1029.2,532.7 L1024.2,529.7 L1019.2,526.8 L1014.2,523.9 L1009.5,521.3 L1004.7,518.8 L999.5,516.1 L994.2,513.5 L988.8,510.9 L983.8,508.4 L979.2,506.2 L975.4,504.4 L972.5,503.0 L970.9,502.3 L968.8,501.3 L966.4,500.2 L963.6,498.9 L960.6,497.6 L957.3,496.3 L953.7,495.1 L950.0,494.0 L945.9,493.0 L941.4,492.0 L936.6,491.0 L931.5,490.1 L926.4,489.3 L921.3,488.6 L916.4,488.1 L911.8,487.8 L907.2,487.8 L902.5,488.1 L897.7,488.6 L893.0,489.2 L888.7,489.8 L884.8,490.4 L881.5,491.0 L879.0,491.3 L838.2,501.8 L808.6,478.5 L791.0,482.9 L791.2,483.4 L791.5,483.9 L791.9,484.5 L792.3,485.2 L792.8,486.1 L793.2,487.3 L793.8,488.7 L794.3,490.5 L794.9,492.7 L795.7,495.4 L796.6,498.4 L797.4,501.6 L798.2,505.0 L799.0,508.3 L799.5,511.6 L799.8,514.7 L799.9,517.7 L799.9,520.7 L799.8,523.8 L799.5,526.8 L799.1,529.8 L798.5,532.6 L797.8,535.4 L797.0,538.0 L796.0,540.5 L794.7,542.9 L793.3,545.3 L791.7,547.5 L790.0,549.6 L788.3,551.6 L786.6,553.4 L785.0,555.0 L783.4,556.4 L781.9,557.6 L780.4,558.6 L778.9,559.4 L777.2,560.2 L775.4,560.8 L773.4,561.4 L771.2,562.0 L768.7,562.5 L766.1,562.9 L763.4,563.2 L760.4,563.4 L757.3,563.6 L754.1,563.8 L750.6,564.0 L747.0,564.2 L742.9,564.5 L738.2,564.8 L733.1,565.1 L727.9,565.4 L723.0,565.7 L718.5,566.0 L714.7,566.2 L711.9,566.4 L696.5,571.9 L702.0,578.5 L682.2,583.3 L609.7,547.3 L609.7,547.3 L607.6,546.5 L604.9,545.4 L601.7,544.1 L598.1,542.7 L594.3,541.2 L590.4,539.8 L586.6,538.5 L583.0,537.4 L579.6,536.5 L576.2,535.5 L572.7,534.7 L569.2,533.9 L565.8,533.2 L562.3,532.6 L558.9,532.2 L555.4,532.0 L551.8,532.0 L547.9,532.3 L543.9,532.7 L539.9,533.3 L536.2,533.9 L532.8,534.4 L530.0,534.9 L527.9,535.2 L453.2,555.2 L402.0,517.0 L339.0,475.6 L291.5,448.0" fill="none" stroke="#22b2f6" stroke-width="1.5" stroke-linejoin="round" stroke-linecap="round" opacity="1"/>
<path d="M291.5,448.0 C304.0,444.7 349.2,431.9 366.5,428.0 C383.8,424.1 383.3,424.2 395.0,424.5 C406.7,424.8 429.7,429.1 436.6,430.0" fill="none" stroke="#22b2f6" stroke-width="1.4" stroke-linejoin="round" stroke-linecap="round" opacity="1"/>
<path d="M366.5,428.0 L425.5,475.0" fill="none" stroke="#22b2f6" stroke-width="1.4" stroke-linejoin="round" stroke-linecap="round" opacity="1"/>
<path d="M339.0,475.6 C341.7,475.0 340.6,472.1 355.0,472.0 C369.4,471.9 413.8,474.5 425.5,475.0" fill="none" stroke="#22b2f6" stroke-width="1.4" stroke-linejoin="round" stroke-linecap="round" opacity="1"/>
<path d="M402.0,517.0 C405.2,515.0 413.1,510.2 421.0,505.0 C428.9,499.8 444.8,489.2 449.6,486.0" fill="none" stroke="#22b2f6" stroke-width="1.4" stroke-linejoin="round" stroke-linecap="round" opacity="1"/>
<path d="M605.5,517.0 L609.7,547.3" fill="none" stroke="#22b2f6" stroke-width="1.4" stroke-linejoin="round" stroke-linecap="round" opacity="1"/>
<path d="M621.0,452.0 C624.5,450.7 636.2,447.7 642.0,444.0 C647.8,440.3 652.8,435.3 656.0,430.0 C659.2,424.7 660.7,417.3 661.0,412.0 C661.3,406.7 659.7,402.7 658.0,398.0 C656.3,393.3 652.2,386.1 651.0,383.7" fill="none" stroke="#22b2f6" stroke-width="1.3" stroke-linejoin="round" stroke-linecap="round" opacity="1"/>
<path d="M651.0,383.7 L668.5,379.0 L684.3,385.3" fill="none" stroke="#22b2f6" stroke-width="1.4" stroke-linejoin="round" stroke-linecap="round" opacity="1"/>
<path d="M698.9,103.2 L718.5,97.9 L737.9,109.5 L778.8,98.6" fill="none" stroke="#22b2f6" stroke-width="1.4" stroke-linejoin="round" stroke-linecap="round" opacity="1"/>
<path d="M698.9,103.2 L709.9,130.6" fill="none" stroke="#22b2f6" stroke-width="1.4" stroke-linejoin="round" stroke-linecap="round" opacity="1"/>
<path d="M778.8,98.6 C785.0,97.6 805.6,93.2 815.8,92.4 C826.0,91.6 830.4,91.9 840.0,93.7 C849.6,95.5 868.0,101.8 873.6,103.4" fill="none" stroke="#22b2f6" stroke-width="1.4" stroke-linejoin="round" stroke-linecap="round" opacity="1"/>
<path d="M745.0,140.0 L712.0,320.0 L692.0,420.0" fill="none" stroke="#22b2f6" stroke-width="1.4" stroke-linejoin="round" stroke-linecap="round" opacity="1"/>
<path d="M705.0,120.0 L688.0,300.0 L664.0,470.0" fill="none" stroke="#22b2f6" stroke-width="1.4" stroke-linejoin="round" stroke-linecap="round" opacity="1"/>
<path d="M728.0,150.0 L703.0,300.0 L684.0,420.0" fill="none" stroke="#22b2f6" stroke-width="1.4" stroke-linejoin="round" stroke-linecap="round" opacity="1"/>
<path d="M698.9,103.2 L682.0,290.0 L652.0,430.0" fill="none" stroke="#22b2f6" stroke-width="1.4" stroke-linejoin="round" stroke-linecap="round" opacity="1"/>
<path d="M709.9,130.6 L694.7,255.0 L660.0,440.0" fill="none" stroke="#22b2f6" stroke-width="1.4" stroke-linejoin="round" stroke-linecap="round" opacity="1"/>
<path d="M718.5,97.9 L700.0,300.0 L667.0,470.0" fill="none" stroke="#22b2f6" stroke-width="1.4" stroke-linejoin="round" stroke-linecap="round" opacity="1"/>
<path d="M737.9,109.5 L705.0,280.0 L680.0,400.0" fill="none" stroke="#22b2f6" stroke-width="1.4" stroke-linejoin="round" stroke-linecap="round" opacity="1"/>
<path d="M778.8,98.6 L864.0,162.1" fill="none" stroke="#22b2f6" stroke-width="1.4" stroke-linejoin="round" stroke-linecap="round" opacity="1"/>
<path d="M737.9,109.5 L802.1,153.9 L810.3,159.8" fill="none" stroke="#22b2f6" stroke-width="1.4" stroke-linejoin="round" stroke-linecap="round" opacity="1"/>
<path d="M709.9,130.6 L802.1,153.9" fill="none" stroke="#22b2f6" stroke-width="1.4" stroke-linejoin="round" stroke-linecap="round" opacity="1"/>
<path d="M778.8,98.6 L762.0,217.0" fill="none" stroke="#22b2f6" stroke-width="1.4" stroke-linejoin="round" stroke-linecap="round" opacity="1"/>
<path d="M785.8,160.9 L802.1,153.9" fill="none" stroke="#22b2f6" stroke-width="1.4" stroke-linejoin="round" stroke-linecap="round" opacity="1"/>
<path d="M810.3,159.8 L864.0,162.1" fill="none" stroke="#22b2f6" stroke-width="1.4" stroke-linejoin="round" stroke-linecap="round" opacity="1"/>
<path d="M810.3,159.8 L889.5,222.9" fill="none" stroke="#22b2f6" stroke-width="1.4" stroke-linejoin="round" stroke-linecap="round" opacity="1"/>
<path d="M808.0,200.7 L854.7,193.6" fill="none" stroke="#22b2f6" stroke-width="1.4" stroke-linejoin="round" stroke-linecap="round" opacity="1"/>
<path d="M806.8,229.9 L879.0,261.3" fill="none" stroke="#22b2f6" stroke-width="1.4" stroke-linejoin="round" stroke-linecap="round" opacity="1"/>
<path d="M859.3,198.2 L889.7,222.4" fill="none" stroke="#22b2f6" stroke-width="1.4" stroke-linejoin="round" stroke-linecap="round" opacity="1"/>
<path d="M802.1,153.9 L797.0,230.0" fill="none" stroke="#22b2f6" stroke-width="1.4" stroke-linejoin="round" stroke-linecap="round" opacity="1"/>
<path d="M810.3,159.8 L800.0,260.0 L775.0,400.0" fill="none" stroke="#22b2f6" stroke-width="1.4" stroke-linejoin="round" stroke-linecap="round" opacity="1"/>
<path d="M785.8,160.9 C787.6,163.4 793.5,169.9 796.7,175.7 C799.9,181.4 803.0,189.6 805.0,195.4 C807.0,201.2 808.3,205.5 808.8,210.5 C809.3,215.5 808.8,221.3 808.0,225.6 C807.2,229.9 806.2,233.2 804.3,236.2 C802.4,239.2 801.5,241.9 796.7,243.7 C791.9,245.5 782.9,246.6 775.6,246.8 C768.3,247.0 759.8,246.3 753.0,245.0 C746.2,243.7 740.2,241.1 735.0,239.0 C729.8,236.9 724.0,233.5 721.8,232.4" fill="none" stroke="#22b2f6" stroke-width="1.8" stroke-linejoin="round" stroke-linecap="round" opacity="1"/>
<path d="M786.0,166.0 C787.3,168.2 791.5,174.0 794.0,179.0 C796.5,184.0 799.2,190.7 801.0,196.0 C802.8,201.3 804.0,206.2 804.5,211.0 C805.0,215.8 804.8,221.0 804.0,225.0 C803.2,229.0 801.8,232.4 800.0,235.0 C798.2,237.6 797.2,239.1 793.0,240.5 C788.8,241.9 781.7,243.2 775.0,243.5 C768.3,243.8 759.7,243.2 753.0,242.0 C746.3,240.8 739.8,237.5 735.0,236.0 C730.2,234.5 725.8,233.5 724.0,233.0" fill="none" stroke="#22b2f6" stroke-width="1" stroke-linejoin="round" stroke-linecap="round" opacity="0.9"/>
<path d="M785.8,160.9 C785.2,162.4 783.6,165.2 782.4,169.7 C781.2,174.2 780.0,181.8 778.6,187.8 C777.2,193.9 776.3,201.0 774.0,206.0 C771.7,211.0 769.0,214.7 765.0,218.0 C761.0,221.3 755.7,223.6 749.9,225.6 C744.1,227.6 734.9,229.0 730.2,230.1 C725.5,231.2 723.2,232.0 721.8,232.4" fill="none" stroke="#22b2f6" stroke-width="1.8" stroke-linejoin="round" stroke-linecap="round" opacity="1"/>
<path d="M785.0,170.0 C784.5,173.0 783.2,181.8 782.0,188.0 C780.8,194.2 780.3,201.5 778.0,207.0 C775.7,212.5 772.5,217.3 768.0,221.0 C763.5,224.7 757.2,226.9 751.0,229.0 C744.8,231.1 735.5,232.5 731.0,233.5 C726.5,234.5 725.2,234.8 724.0,235.0" fill="none" stroke="#22b2f6" stroke-width="1" stroke-linejoin="round" stroke-linecap="round" opacity="0.9"/>
<path d="M670.0,227.2 C674.5,227.3 688.4,227.1 697.0,228.0 C705.6,228.9 717.7,231.7 721.8,232.4" fill="none" stroke="#22b2f6" stroke-width="1.4" stroke-linejoin="round" stroke-linecap="round" opacity="1"/>
<path d="M672.4,248.0 C675.6,247.6 686.2,246.6 691.6,245.3 C697.0,244.0 700.0,242.2 705.0,240.0 C710.0,237.8 719.0,233.7 721.8,232.4" fill="none" stroke="#22b2f6" stroke-width="1.4" stroke-linejoin="round" stroke-linecap="round" opacity="1"/>
<path d="M691.6,245.3 L725.3,273.2" fill="none" stroke="#22b2f6" stroke-width="1.4" stroke-linejoin="round" stroke-linecap="round" opacity="1"/>
<path d="M753.0,245.0 L725.3,273.2 L765.0,329.3" fill="none" stroke="#22b2f6" stroke-width="1.4" stroke-linejoin="round" stroke-linecap="round" opacity="1"/>
<path d="M753.0,245.0 L775.5,316.4 L786.0,325.8" fill="none" stroke="#22b2f6" stroke-width="1.4" stroke-linejoin="round" stroke-linecap="round" opacity="1"/>
<path d="M640.0,280.2 C643.9,280.6 655.6,280.9 663.4,282.6 C671.2,284.4 677.8,286.6 686.7,290.7 C695.6,294.8 704.0,300.6 717.0,307.0 C730.0,313.4 757.0,325.6 765.0,329.3" fill="none" stroke="#22b2f6" stroke-width="1.4" stroke-linejoin="round" stroke-linecap="round" opacity="1"/>
<path d="M765.0,329.3 C768.5,328.7 779.6,329.3 786.0,325.8 C792.4,322.3 797.9,310.9 803.6,308.3 C809.3,305.7 817.3,310.0 820.0,310.4" fill="none" stroke="#22b2f6" stroke-width="1.4" stroke-linejoin="round" stroke-linecap="round" opacity="1"/>
<path d="M721.8,232.4 L662.5,470.0 L656.3,497.7" fill="none" stroke="#22b2f6" stroke-width="1.4" stroke-linejoin="round" stroke-linecap="round" opacity="1"/>
<path d="M725.3,273.2 L673.0,470.0 L655.4,535.2" fill="none" stroke="#22b2f6" stroke-width="1.4" stroke-linejoin="round" stroke-linecap="round" opacity="1"/>
<path d="M753.0,245.0 L698.0,470.0 L682.1,583.4" fill="none" stroke="#22b2f6" stroke-width="1.4" stroke-linejoin="round" stroke-linecap="round" opacity="1"/>
<path d="M765.0,329.3 L719.6,470.0 L696.4,571.8" fill="none" stroke="#22b2f6" stroke-width="1.4" stroke-linejoin="round" stroke-linecap="round" opacity="1"/>
<path d="M775.5,316.4 L735.0,470.0 L702.7,578.0" fill="none" stroke="#22b2f6" stroke-width="1.4" stroke-linejoin="round" stroke-linecap="round" opacity="1"/>
<path d="M812.0,300.0 L776.8,470.0 L746.4,562.9" fill="none" stroke="#22b2f6" stroke-width="1.4" stroke-linejoin="round" stroke-linecap="round" opacity="1"/>
<path d="M610.7,498.6 C613.9,498.5 622.4,498.1 630.0,498.0 C637.6,497.9 651.9,497.8 656.3,497.7" fill="none" stroke="#22b2f6" stroke-width="1.4" stroke-linejoin="round" stroke-linecap="round" opacity="1"/>
<path d="M656.3,497.7 C657.2,499.1 656.8,503.3 662.0,506.0 C667.2,508.7 678.5,512.2 687.5,513.8 C696.5,515.2 707.6,516.0 716.0,515.0 C724.4,514.0 733.7,510.7 738.0,508.0 C742.3,505.3 741.3,500.2 742.0,498.6" fill="none" stroke="#22b2f6" stroke-width="1.4" stroke-linejoin="round" stroke-linecap="round" opacity="1"/>
<path d="M610.7,498.6 L655.4,535.2" fill="none" stroke="#22b2f6" stroke-width="1.4" stroke-linejoin="round" stroke-linecap="round" opacity="1"/>
<path d="M655.4,535.2 C657.8,533.3 664.6,527.6 670.0,524.0 C675.4,520.4 684.6,515.5 687.5,513.8" fill="none" stroke="#22b2f6" stroke-width="1.4" stroke-linejoin="round" stroke-linecap="round" opacity="1"/>
<path d="M687.5,513.8 L746.4,562.9" fill="none" stroke="#22b2f6" stroke-width="1.4" stroke-linejoin="round" stroke-linecap="round" opacity="1"/>
<path d="M655.4,535.2 L695.5,570.9" fill="none" stroke="#22b2f6" stroke-width="1.4" stroke-linejoin="round" stroke-linecap="round" opacity="1"/>
<path d="M742.0,498.6 L764.3,506.6 L800.0,516.4" fill="none" stroke="#22b2f6" stroke-width="1.4" stroke-linejoin="round" stroke-linecap="round" opacity="1"/>
<path d="M748.0,470.0 L791.0,482.5" fill="none" stroke="#22b2f6" stroke-width="1.4" stroke-linejoin="round" stroke-linecap="round" opacity="1"/>
<path d="M607.1,518.2 L609.8,546.8" fill="none" stroke="#22b2f6" stroke-width="1.4" stroke-linejoin="round" stroke-linecap="round" opacity="1"/>
<path d="M635.7,470.0 L609.8,546.8" fill="none" stroke="#22b2f6" stroke-width="1.4" stroke-linejoin="round" stroke-linecap="round" opacity="1"/>
<path d="M742.0,498.6 L760.0,440.0 L772.0,372.0" fill="none" stroke="#22b2f6" stroke-width="1.4" stroke-linejoin="round" stroke-linecap="round" opacity="1"/>
<path d="M873.6,103.4 L947.7,131.6 L967.5,126.0 L1007.5,157.7 L1066.5,207.0 L1157.2,293.4 L1136.6,298.4 L1065.0,259.3" fill="none" stroke="#22b2f6" stroke-width="1.4" stroke-linejoin="round" stroke-linecap="round" opacity="1"/>
<path d="M1046.0,211.0 C1047.7,211.8 1052.6,216.7 1056.0,216.0 C1059.4,215.3 1064.8,208.5 1066.5,207.0" fill="none" stroke="#22b2f6" stroke-width="1.4" stroke-linejoin="round" stroke-linecap="round" opacity="1"/>
<path d="M1046.0,211.0 L1065.0,259.3" fill="none" stroke="#22b2f6" stroke-width="1.4" stroke-linejoin="round" stroke-linecap="round" opacity="1"/>
<path d="M1065.0,259.3 C1060.0,257.6 1045.5,251.7 1035.0,249.0 C1024.5,246.3 1012.4,243.8 1002.0,243.4 C991.6,243.0 977.4,246.2 972.5,246.8" fill="none" stroke="#22b2f6" stroke-width="1.4" stroke-linejoin="round" stroke-linecap="round" opacity="1"/>
<path d="M873.6,103.4 L916.0,152.8" fill="none" stroke="#22b2f6" stroke-width="1.4" stroke-linejoin="round" stroke-linecap="round" opacity="1"/>
<path d="M873.6,103.4 L864.0,162.1 L858.0,190.0" fill="none" stroke="#22b2f6" stroke-width="1.4" stroke-linejoin="round" stroke-linecap="round" opacity="1"/>
<path d="M947.7,131.6 L942.0,157.0" fill="none" stroke="#22b2f6" stroke-width="1.4" stroke-linejoin="round" stroke-linecap="round" opacity="1"/>
<path d="M967.5,126.0 L960.0,165.0" fill="none" stroke="#22b2f6" stroke-width="1.4" stroke-linejoin="round" stroke-linecap="round" opacity="1"/>
<path d="M947.7,131.6 L974.7,171.5" fill="none" stroke="#22b2f6" stroke-width="1.4" stroke-linejoin="round" stroke-linecap="round" opacity="1"/>
<path d="M1007.5,157.7 L974.7,171.5 L971.0,181.0" fill="none" stroke="#22b2f6" stroke-width="1.4" stroke-linejoin="round" stroke-linecap="round" opacity="1"/>
<path d="M1007.5,157.7 L1001.0,184.4" fill="none" stroke="#22b2f6" stroke-width="1.4" stroke-linejoin="round" stroke-linecap="round" opacity="1"/>
<path d="M865.3,168.0 C866.9,165.9 870.6,158.3 875.0,155.5 C879.4,152.7 884.6,151.3 891.4,150.9 C898.2,150.5 902.7,149.5 916.0,152.8 C929.3,156.1 953.7,163.6 971.0,170.7 C988.3,177.8 1007.5,188.7 1020.0,195.4 C1032.5,202.1 1041.7,208.4 1046.0,211.0" fill="none" stroke="#22b2f6" stroke-width="2" stroke-linejoin="round" stroke-linecap="round" opacity="1"/>
<path d="M866.7,170.7 C870.4,171.1 878.2,172.5 888.7,173.4 C899.2,174.3 914.0,173.7 930.0,176.0 C946.0,178.3 965.7,181.0 985.0,187.0 C1004.3,193.0 1035.8,207.8 1046.0,212.0" fill="none" stroke="#22b2f6" stroke-width="1.8" stroke-linejoin="round" stroke-linecap="round" opacity="1"/>
<path d="M888.7,173.4 L972.5,246.8" fill="none" stroke="#22b2f6" stroke-width="1.4" stroke-linejoin="round" stroke-linecap="round" opacity="1"/>
<path d="M931.3,258.6 L972.5,246.8" fill="none" stroke="#22b2f6" stroke-width="1.4" stroke-linejoin="round" stroke-linecap="round" opacity="1"/>
<path d="M888.7,173.4 L880.0,211.4" fill="none" stroke="#22b2f6" stroke-width="1.4" stroke-linejoin="round" stroke-linecap="round" opacity="1"/>
<path d="M914.0,157.9 L911.0,173.0" fill="none" stroke="#22b2f6" stroke-width="1.4" stroke-linejoin="round" stroke-linecap="round" opacity="1"/>
<path d="M888.7,173.4 L860.0,280.0 L830.0,400.0 L822.0,432.0" fill="none" stroke="#22b2f6" stroke-width="1.4" stroke-linejoin="round" stroke-linecap="round" opacity="1"/>
<path d="M854.7,193.6 L889.5,222.9 L931.3,258.6" fill="none" stroke="#22b2f6" stroke-width="1.4" stroke-linejoin="round" stroke-linecap="round" opacity="1"/>
<path d="M820.0,206.0 L872.2,227.0 L879.0,261.3" fill="none" stroke="#22b2f6" stroke-width="1.4" stroke-linejoin="round" stroke-linecap="round" opacity="1"/>
<path d="M872.2,227.0 L889.5,222.9" fill="none" stroke="#22b2f6" stroke-width="1.4" stroke-linejoin="round" stroke-linecap="round" opacity="1"/>
<path d="M931.3,258.6 L872.0,450.0 L838.2,501.8" fill="none" stroke="#22b2f6" stroke-width="1.4" stroke-linejoin="round" stroke-linecap="round" opacity="1"/>
<path d="M971.0,250.0 L899.7,450.0 L879.0,491.3" fill="none" stroke="#22b2f6" stroke-width="1.4" stroke-linejoin="round" stroke-linecap="round" opacity="1"/>
<path d="M1046.0,211.0 L1010.0,340.0 L976.0,462.0" fill="none" stroke="#22b2f6" stroke-width="1.5" stroke-linejoin="round" stroke-linecap="round" opacity="1"/>
<path d="M1066.5,207.0 L991.0,464.4" fill="none" stroke="#22b2f6" stroke-width="1.4" stroke-linejoin="round" stroke-linecap="round" opacity="1"/>
<path d="M1065.0,259.3 L1032.0,350.0 L972.5,503.0" fill="none" stroke="#22b2f6" stroke-width="1.4" stroke-linejoin="round" stroke-linecap="round" opacity="1"/>
<path d="M1136.6,298.4 L1044.2,541.8" fill="none" stroke="#22b2f6" stroke-width="1.4" stroke-linejoin="round" stroke-linecap="round" opacity="1"/>
<path d="M1157.2,293.4 L1063.9,536.4" fill="none" stroke="#22b2f6" stroke-width="1.4" stroke-linejoin="round" stroke-linecap="round" opacity="1"/>
<path d="M974.8,457.4 L991.0,464.4 L1063.9,536.4" fill="none" stroke="#22b2f6" stroke-width="1.4" stroke-linejoin="round" stroke-linecap="round" opacity="1"/>
<path d="M972.5,503.0 L970.0,471.4" fill="none" stroke="#22b2f6" stroke-width="1.4" stroke-linejoin="round" stroke-linecap="round" opacity="1"/>
<path d="M865.0,168.0 L859.0,200.0 L808.4,360.0 L794.0,405.0 L792.7,431.7" fill="none" stroke="#22b2f6" stroke-width="1.4" stroke-linejoin="round" stroke-linecap="round" opacity="1"/>
<path d="M878.0,200.0 L826.0,360.0 L812.0,420.0" fill="none" stroke="#22b2f6" stroke-width="1.4" stroke-linejoin="round" stroke-linecap="round" opacity="1"/>
<path d="M872.0,227.5 L836.0,340.0 L818.0,420.0" fill="none" stroke="#22b2f6" stroke-width="1.4" stroke-linejoin="round" stroke-linecap="round" opacity="1"/>
<path d="M889.7,222.0 L852.0,340.0 L835.0,430.0" fill="none" stroke="#22b2f6" stroke-width="1.4" stroke-linejoin="round" stroke-linecap="round" opacity="1"/>
<path d="M792.7,431.7 C798.9,432.1 818.0,433.0 830.0,434.0 C842.0,435.0 853.3,435.8 865.0,437.6 C876.7,439.4 888.3,441.3 900.0,444.6 C911.7,447.9 923.3,452.9 935.0,457.4 C946.7,461.9 964.2,469.1 970.0,471.4" fill="none" stroke="#22b2f6" stroke-width="1.4" stroke-linejoin="round" stroke-linecap="round" opacity="1"/>
<path d="M879.0,261.3 C879.2,264.1 882.2,271.4 880.0,278.0 C877.8,284.6 871.0,296.0 866.0,301.0 C861.0,306.0 856.2,306.8 850.0,308.2 C843.8,309.6 833.5,309.2 828.5,309.6 C823.5,310.0 821.4,310.3 820.0,310.4" fill="none" stroke="#22b2f6" stroke-width="1.4" stroke-linejoin="round" stroke-linecap="round" opacity="1"/>
<path d="M771.2,369.0 L803.2,373.3" fill="none" stroke="#22b2f6" stroke-width="1.4" stroke-linejoin="round" stroke-linecap="round" opacity="1"/>
<circle cx="338.5" cy="166.5" r="1.5" fill="#22b2f6"/>
<circle cx="413.8" cy="146.0" r="1.5" fill="#22b2f6"/>
<circle cx="396.0" cy="200.0" r="1.5" fill="#22b2f6"/>
<circle cx="474.5" cy="252.5" r="1.5" fill="#22b2f6"/>
<circle cx="497.0" cy="151.4" r="1.5" fill="#22b2f6"/>
<circle cx="513.6" cy="215.9" r="1.5" fill="#22b2f6"/>
<circle cx="535.5" cy="300.8" r="1.5" fill="#22b2f6"/>
<circle cx="610.5" cy="281.6" r="1.5" fill="#22b2f6"/>
<circle cx="572.1" cy="176.2" r="1.5" fill="#22b2f6"/>
<circle cx="591.8" cy="170.5" r="1.5" fill="#22b2f6"/>
<circle cx="606.6" cy="180.7" r="1.5" fill="#22b2f6"/>
<circle cx="632.7" cy="200.0" r="1.5" fill="#22b2f6"/>
<circle cx="658.7" cy="172.8" r="1.5" fill="#22b2f6"/>
<circle cx="598.6" cy="213.6" r="1.5" fill="#22b2f6"/>
<circle cx="540.8" cy="195.4" r="1.5" fill="#22b2f6"/>
<circle cx="670.0" cy="227.2" r="1.5" fill="#22b2f6"/>
<circle cx="691.6" cy="245.3" r="1.5" fill="#22b2f6"/>
<circle cx="698.9" cy="103.2" r="1.5" fill="#22b2f6"/>
<circle cx="718.5" cy="97.9" r="1.5" fill="#22b2f6"/>
<circle cx="737.9" cy="109.5" r="1.5" fill="#22b2f6"/>
<circle cx="778.8" cy="98.6" r="1.5" fill="#22b2f6"/>
<circle cx="709.9" cy="130.6" r="1.5" fill="#22b2f6"/>
<circle cx="802.1" cy="153.9" r="1.5" fill="#22b2f6"/>
<circle cx="810.3" cy="159.8" r="1.5" fill="#22b2f6"/>
<circle cx="808.0" cy="200.7" r="1.5" fill="#22b2f6"/>
<circle cx="864.0" cy="162.1" r="1.5" fill="#22b2f6"/>
<circle cx="854.7" cy="193.6" r="1.5" fill="#22b2f6"/>
<circle cx="721.8" cy="232.4" r="1.5" fill="#22b2f6"/>
<circle cx="753.0" cy="245.0" r="1.5" fill="#22b2f6"/>
<circle cx="873.6" cy="103.4" r="1.5" fill="#22b2f6"/>
<circle cx="947.7" cy="131.6" r="1.5" fill="#22b2f6"/>
<circle cx="967.5" cy="126.0" r="1.5" fill="#22b2f6"/>
<circle cx="1007.5" cy="157.7" r="1.5" fill="#22b2f6"/>
<circle cx="974.7" cy="171.5" r="1.5" fill="#22b2f6"/>
<circle cx="1046.0" cy="211.0" r="1.5" fill="#22b2f6"/>
<circle cx="1066.5" cy="207.0" r="1.5" fill="#22b2f6"/>
<circle cx="1065.0" cy="259.3" r="1.5" fill="#22b2f6"/>
<circle cx="1136.6" cy="298.4" r="1.5" fill="#22b2f6"/>
<circle cx="1157.2" cy="293.4" r="1.5" fill="#22b2f6"/>
<circle cx="888.7" cy="173.4" r="1.5" fill="#22b2f6"/>
<circle cx="889.5" cy="222.9" r="1.5" fill="#22b2f6"/>
<circle cx="872.2" cy="227.0" r="1.5" fill="#22b2f6"/>
<circle cx="931.3" cy="258.6" r="1.5" fill="#22b2f6"/>
<circle cx="972.5" cy="246.8" r="1.5" fill="#22b2f6"/>
<circle cx="879.0" cy="261.3" r="1.5" fill="#22b2f6"/>
<circle cx="291.5" cy="448.0" r="1.5" fill="#22b2f6"/>
<circle cx="366.5" cy="428.0" r="1.5" fill="#22b2f6"/>
<circle cx="339.0" cy="475.6" r="1.5" fill="#22b2f6"/>
<circle cx="402.0" cy="517.0" r="1.5" fill="#22b2f6"/>
<circle cx="453.2" cy="555.2" r="1.5" fill="#22b2f6"/>
<circle cx="527.9" cy="535.2" r="1.5" fill="#22b2f6"/>
<circle cx="609.7" cy="547.3" r="1.5" fill="#22b2f6"/>
<circle cx="682.2" cy="583.3" r="1.5" fill="#22b2f6"/>
<circle cx="702.0" cy="578.5" r="1.5" fill="#22b2f6"/>
<circle cx="747.0" cy="564.2" r="1.5" fill="#22b2f6"/>
<circle cx="838.2" cy="501.8" r="1.5" fill="#22b2f6"/>
<circle cx="879.0" cy="491.3" r="1.5" fill="#22b2f6"/>
<circle cx="1044.2" cy="541.8" r="1.5" fill="#22b2f6"/>
<circle cx="1063.9" cy="536.4" r="1.5" fill="#22b2f6"/>
<circle cx="972.5" cy="503.0" r="1.5" fill="#22b2f6"/>
<circle cx="991.0" cy="464.4" r="1.5" fill="#22b2f6"/>
<circle cx="449.6" cy="486.0" r="1.5" fill="#22b2f6"/>
<circle cx="605.5" cy="517.0" r="1.5" fill="#22b2f6"/>
<circle cx="765.0" cy="329.3" r="1.5" fill="#22b2f6"/>
<circle cx="786.0" cy="325.8" r="1.5" fill="#22b2f6"/>
<circle cx="725.3" cy="273.2" r="1.5" fill="#22b2f6"/>
<circle cx="656.3" cy="497.7" r="1.5" fill="#22b2f6"/>
<circle cx="687.5" cy="513.8" r="1.5" fill="#22b2f6"/>
<circle cx="742.0" cy="498.6" r="1.5" fill="#22b2f6"/>
<circle cx="610.7" cy="498.6" r="1.5" fill="#22b2f6"/>
<circle cx="655.4" cy="535.2" r="1.5" fill="#22b2f6"/>
<circle cx="764.3" cy="506.6" r="1.5" fill="#22b2f6"/>
<circle cx="808.6" cy="478.5" r="1.5" fill="#22b2f6"/>
<circle cx="791.0" cy="482.9" r="1.5" fill="#22b2f6"/>
<circle cx="1046" cy="211" r="2" fill="#fff"/></svg>
<div class="a" style="left:1172px;top:60px;width:25px;height:645px;background:#e2e1e6"></div>
<div class="a" style="left:1177px;top:64px;width:16px;height:1px;background:repeating-linear-gradient(90deg,#9a9a9a 0 1px,transparent 1px 3px)"></div>
<svg class="a" style="left:1175px;top:70px" width="19" height="18" viewBox="0 0 19 18"><path d="M11 11 L16.5 16.5" stroke="#a8a8a8" stroke-width="3" stroke-linecap="round"/><circle cx="7.5" cy="7.5" r="6" fill="#e2e2e2" stroke="#b3b3b3" stroke-width="1.5"/><circle cx="7.5" cy="7.5" r="3.5" fill="#d0d0d0"/></svg>
<svg class="a" style="left:1175px;top:91px" width="19" height="18" viewBox="0 0 19 18"><path d="M11 11 L16.5 16.5" stroke="#c9a21c" stroke-width="3.2" stroke-linecap="round"/><circle cx="7.5" cy="7.5" r="6" fill="#6fc3e6" stroke="#8a8a8a" stroke-width="1.2"/><path d="M4 5l2 2M11 5l-2 2M4 10l2-2M11 10l-2 2" stroke="#1c4e7c" stroke-width="1.6"/></svg>
<svg class="a" style="left:1175px;top:112px" width="19" height="18" viewBox="0 0 19 18"><path d="M11 11 L16.5 16.5" stroke="#c9a21c" stroke-width="3.2" stroke-linecap="round"/><circle cx="7.5" cy="7.5" r="6" fill="#6fc3e6" stroke="#8a8a8a" stroke-width="1.2"/><path d="M4.5 6.5h6M4.5 8.8h6" stroke="#1c4e7c" stroke-width="1.4"/></svg>
<svg class="a" style="left:1176px;top:134px" width="18" height="17" viewBox="0 0 18 17"><path d="M3 2.5 V14.5 H15.5" fill="none" stroke="#b00000" stroke-width="2"/><path d="M0.5 4.5 L3 0.5 L5.5 4.5z M14.5 12 L18 14.5 L14.5 17z" fill="#b00000"/><path d="M5 7.5h3M6.5 6v3" stroke="#111" stroke-width="1.2"/><text x="12.3" y="11" font-family="Liberation Sans" font-weight="bold" font-size="10.5" text-anchor="middle" fill="#111">X</text></svg>
<svg class="a" style="left:1176px;top:155px" width="18" height="17" viewBox="0 0 18 17"><path d="M3 2.5 V14.5 H15.5" fill="none" stroke="#b00000" stroke-width="2"/><path d="M0.5 4.5 L3 0.5 L5.5 4.5z M14.5 12 L18 14.5 L14.5 17z" fill="#b00000"/><path d="M5 7.5h3" stroke="#111" stroke-width="1.2"/><text x="12.3" y="11" font-family="Liberation Sans" font-weight="bold" font-size="10.5" text-anchor="middle" fill="#111">X</text></svg>
<svg class="a" style="left:1176px;top:177px" width="18" height="17" viewBox="0 0 18 17"><path d="M3 2.5 V14.5 H15.5" fill="none" stroke="#b00000" stroke-width="2"/><path d="M0.5 4.5 L3 0.5 L5.5 4.5z M14.5 12 L18 14.5 L14.5 17z" fill="#b00000"/><path d="M5 7.5h3M6.5 6v3" stroke="#111" stroke-width="1.2"/><text x="12.3" y="11" font-family="Liberation Sans" font-weight="bold" font-size="10.5" text-anchor="middle" fill="#111">Y</text></svg>
<svg class="a" style="left:1176px;top:198px" width="18" height="17" viewBox="0 0 18 17"><path d="M3 2.5 V14.5 H15.5" fill="none" stroke="#b00000" stroke-width="2"/><path d="M0.5 4.5 L3 0.5 L5.5 4.5z M14.5 12 L18 14.5 L14.5 17z" fill="#b00000"/><path d="M5 7.5h3" stroke="#111" stroke-width="1.2"/><text x="12.3" y="11" font-family="Liberation Sans" font-weight="bold" font-size="10.5" text-anchor="middle" fill="#111">Y</text></svg>
<svg class="a" style="left:1176px;top:219px" width="18" height="17" viewBox="0 0 18 17"><path d="M3 2.5 V14.5 H15.5" fill="none" stroke="#b00000" stroke-width="2"/><path d="M0.5 4.5 L3 0.5 L5.5 4.5z M14.5 12 L18 14.5 L14.5 17z" fill="#b00000"/><path d="M5 7.5h3M6.5 6v3" stroke="#111" stroke-width="1.2"/><text x="12.3" y="11" font-family="Liberation Sans" font-weight="bold" font-size="10.5" text-anchor="middle" fill="#111">Z</text></svg>
<svg class="a" style="left:1176px;top:240px" width="18" height="17" viewBox="0 0 18 17"><path d="M3 2.5 V14.5 H15.5" fill="none" stroke="#b00000" stroke-width="2"/><path d="M0.5 4.5 L3 0.5 L5.5 4.5z M14.5 12 L18 14.5 L14.5 17z" fill="#b00000"/><path d="M5 7.5h3" stroke="#111" stroke-width="1.2"/><text x="12.3" y="11" font-family="Liberation Sans" font-weight="bold" font-size="10.5" text-anchor="middle" fill="#111">Z</text></svg>
<div class="a" style="left:259px;top:654px;width:913px;height:50px;background:#e2e1e6"></div>
<div class="a" style="left:262px;top:654px;width:910px;height:3px;background:#ececf0"></div>
<div class="a" style="left:261px;top:658px;width:911px;height:14px;background:#e3e2e7;border:1px solid #b1b1b5;border-bottom:2px solid #a5a5aa"></div>
<svg class="a" style="left:1151px;top:660px" width="8" height="8" viewBox="0 0 8 8"><rect x="2.5" y=".5" width="5" height="4" fill="none" stroke="#111"/><rect x=".5" y="3.5" width="5" height="4" fill="#e3e2e7" stroke="#111"/></svg>
<svg class="a" style="left:1161px;top:659px" width="9" height="9" viewBox="0 0 9 9"><path d="M1.5 1.5L7.5 7.5M7.5 1.5L1.5 7.5" stroke="#111" stroke-width="1.5"/></svg>
<div class="a" style="left:262px;top:673px;width:910px;height:31px;background:#fff;border-left:1px solid #a5a5aa"></div>
<div class="a" style="left:1160px;top:674px;width:11px;height:12px;border:1px solid #b9c0cc;border-radius:2px;background:linear-gradient(#f4f5fa,#d4d7e3)"><svg class="a" style="left:1px;top:3px" width="8" height="5"><path d="M1 4L4 1L7 4" stroke="#333" stroke-width="1.4" fill="none"/></svg></div>
<div class="a" style="left:1160px;top:686px;width:11px;height:5px;border:1px solid #c4c9d4;background:linear-gradient(90deg,#e9ebf2,#d9dce6)"></div>
<div class="a" style="left:1160px;top:692px;width:11px;height:12px;border:1px solid #b9c0cc;border-radius:2px;background:linear-gradient(#f4f5fa,#d4d7e3)"><svg class="a" style="left:1px;top:3px" width="8" height="5"><path d="M1 1L4 4L7 1" stroke="#333" stroke-width="1.4" fill="none"/></svg></div>
<div class="a" style="left:3px;top:704px;width:1194px;height:1px;background:#b0b0b4"></div>
<div class="a" style="left:3px;top:705px;width:1194px;height:19px;background:#e2e1e6"></div>
<svg class="a" style="left:6px;top:708px" width="15" height="15" viewBox="0 0 15 15"><defs><radialGradient id="gc" cx="40%" cy="35%" r="65%"><stop offset="0" stop-color="#c8c8c8"/><stop offset="1" stop-color="#888"/></radialGradient></defs><path d="M4.5 1H10.5L14 4.5V10.5L10.5 14H4.5L1 10.5V4.5z" fill="url(#gc)"/></svg>
<div class="a" style="left:23px;top:707px;width:71px;height:8px;background:#fff;border:1px solid #888;border-radius:2px"></div>
<div class="a" style="left:23px;top:715px;width:71px;height:9px;background:#fff;border:1px solid #888;border-radius:2px"></div>
<div class="a" style="left:97px;top:706px;width:2px;height:18px;border-left:1px solid #c2c2c6;border-right:1px solid #f8f8f8"></div>
<div class="a" style="left:186px;top:706px;width:2px;height:18px;border-left:1px solid #c2c2c6;border-right:1px solid #f8f8f8"></div>
<div class="a" style="left:228px;top:706px;width:2px;height:18px;border-left:1px solid #c2c2c6;border-right:1px solid #f8f8f8"></div>
<div class="a" style="left:866px;top:706px;width:2px;height:18px;border-left:1px solid #c2c2c6;border-right:1px solid #f8f8f8"></div>
<div class="a" style="left:975px;top:706px;width:2px;height:18px;border-left:1px solid #c2c2c6;border-right:1px solid #f8f8f8"></div>
<div class="a" style="left:1085px;top:706px;width:2px;height:18px;border-left:1px solid #c2c2c6;border-right:1px solid #f8f8f8"></div>
<svg class="a" style="left:103px;top:709px" width="12" height="12" viewBox="0 0 12 12"><rect width="12" height="12" fill="#0d9a9a"/><path d="M3 0v12M6 0v12M9 0v12M0 3h12M0 6h12M0 9h12" stroke="#0a6c6c" stroke-width=".9"/></svg>
<svg class="a" style="left:118px;top:708px" width="13" height="14" viewBox="0 0 13 14"><path d="M2.5 11.5 L10.5 2.5" stroke="#999" stroke-width="2.5"/><ellipse cx="4" cy="10" rx="2.5" ry="3.5" transform="rotate(40 4 10)" fill="none" stroke="#888" stroke-width="1.5"/><ellipse cx="9" cy="4" rx="2.5" ry="3.5" transform="rotate(40 9 4)" fill="none" stroke="#888" stroke-width="1.5"/></svg>
<svg class="a" style="left:149px;top:709px" width="12" height="13" viewBox="0 0 12 13"><path d="M0 3 L3 0 H12 V10 L9 13 H0z" fill="#d01818"/><path d="M0 3H9V13M9 3L12 0" stroke="#f05050" stroke-width=".8" fill="none"/><path d="M9 3 L12 0 V10 L9 13z" fill="#901010"/></svg>
<div class="t" style="left:23px;top:7.50px;font-size:10px;color:#1c1c28;font-weight:normal;font-family:'Liberation Sans';transform:scaleX(0.974);">RotorStatorRotor - Pointwise</div>
<div class="t" style="left:8.3px;top:24.29px;font-size:8.6px;color:#2e2e2e;font-weight:normal;font-family:'Liberation Sans';transform:scaleX(0.809);">File</div>
<div class="t" style="left:31px;top:24.29px;font-size:8.6px;color:#2e2e2e;font-weight:normal;font-family:'Liberation Sans';transform:scaleX(0.878);">Edit</div>
<div class="t" style="left:55.5px;top:24.29px;font-size:8.6px;color:#2e2e2e;font-weight:normal;font-family:'Liberation Sans';transform:scaleX(0.839);">View</div>
<div class="t" style="left:82px;top:24.29px;font-size:8.6px;color:#2e2e2e;font-weight:normal;font-family:'Liberation Sans';transform:scaleX(0.852);">Examine</div>
<div class="t" style="left:122px;top:24.29px;font-size:8.6px;color:#2e2e2e;font-weight:normal;font-family:'Liberation Sans';transform:scaleX(0.879);">Select</div>
<div class="t" style="left:154px;top:24.29px;font-size:8.6px;color:#2e2e2e;font-weight:normal;font-family:'Liberation Sans';transform:scaleX(0.892);">Create</div>
<div class="t" style="left:188.8px;top:24.29px;font-size:8.6px;color:#2e2e2e;font-weight:normal;font-family:'Liberation Sans';transform:scaleX(0.819);">Grid</div>
<div class="t" style="left:214px;top:24.29px;font-size:8.6px;color:#2e2e2e;font-weight:normal;font-family:'Liberation Sans';transform:scaleX(0.865);">Script</div>
<div class="t" style="left:244.5px;top:24.29px;font-size:8.6px;color:#2e2e2e;font-weight:normal;font-family:'Liberation Sans';transform:scaleX(0.764);">CAE</div>
<div class="t" style="left:269.5px;top:24.29px;font-size:8.6px;color:#2e2e2e;font-weight:normal;font-family:'Liberation Sans';transform:scaleX(0.877);">Help</div>
<div class="t" style="left:4px;top:64.19px;font-size:8.6px;color:#333;font-weight:normal;font-family:'Liberation Sans';transform:scaleX(0.951);">Panels</div>
<div class="t" style="left:17.9px;top:80.49px;font-size:8.6px;color:#303030;font-weight:normal;font-family:'Liberation Sans';transform:scaleX(0.905);">List</div>
<div class="t" style="left:52px;top:80.49px;font-size:8.6px;color:#303030;font-weight:normal;font-family:'Liberation Sans';transform:scaleX(0.899);">Layers</div>
<div class="t" style="left:92px;top:80.49px;font-size:8.6px;color:#303030;font-weight:normal;font-family:'Liberation Sans';transform:scaleX(0.937);">Attributes</div>
<div class="t" style="left:142.7px;top:80.49px;font-size:8.6px;color:#303030;font-weight:normal;font-family:'Liberation Sans';transform:scaleX(0.898);">Defaults</div>
<div class="t" style="left:189.5px;top:79.49px;font-size:8.6px;color:#303030;font-weight:normal;font-family:'Liberation Sans';transform:scaleX(0.861);">Solve</div>
<div class="t" style="left:79.5px;top:103.69px;font-size:8.6px;color:#303030;font-weight:normal;font-family:'Liberation Sans';transform:scaleX(0.923);">Attributes</div>
<div class="t" style="left:133.5px;top:103.69px;font-size:8.6px;color:#303030;font-weight:normal;font-family:'Liberation Sans';transform:scaleX(0.910);">Edge Attributes</div>
<div class="t" style="left:30.5px;top:103.19px;font-size:8.6px;color:#303030;font-weight:normal;font-family:'Liberation Sans';transform:scaleX(0.861);">Solve</div>
<div class="t" style="left:98px;top:134.69px;font-size:8.6px;color:#222;font-weight:bold;font-family:'Liberation Sans';transform:scaleX(0.988);">Solver Summary</div>
<div class="t" style="left:61px;top:153.69px;font-size:8.6px;color:#222;font-weight:bold;font-family:'Liberation Sans';transform:scaleX(1.004);">Iteration Number</div>
<div class="t" style="left:61px;top:172.69px;font-size:8.6px;color:#222;font-weight:bold;font-family:'Liberation Sans';transform:scaleX(0.942);">RMS Residual</div>
<div class="t" style="left:61px;top:191.69px;font-size:8.6px;color:#222;font-weight:bold;font-family:'Liberation Sans';transform:scaleX(0.965);">Max Residual</div>
<div class="t" style="left:197px;top:154.92px;font-size:8px;color:#333;font-weight:normal;font-family:'Liberation Mono';transform:scaleX(0.833);">1</div>
<div class="t" style="left:141px;top:173.92px;font-size:8px;color:#333;font-weight:normal;font-family:'Liberation Mono';transform:scaleX(1.033);">1.208703e-06</div>
<div class="t" style="left:141px;top:192.92px;font-size:8px;color:#333;font-weight:normal;font-family:'Liberation Mono';transform:scaleX(1.033);">2.956576e-06</div>
<div class="t" style="left:24px;top:237.19px;font-size:8.6px;color:#333;font-weight:normal;font-family:'Liberation Sans';transform:scaleX(0.967);">Iterations:</div>
<div class="t" style="left:95px;top:237.19px;font-size:8.6px;color:#222;font-weight:normal;font-family:'Liberation Sans';transform:scaleX(0.837);">10</div>
<div class="t" style="left:94.5px;top:270.19px;font-size:8.6px;color:#222;font-weight:normal;font-family:'Liberation Sans';transform:scaleX(0.920);">Run</div>
<div class="t" style="left:145.5px;top:270.19px;font-size:8.6px;color:#222;font-weight:normal;font-family:'Liberation Sans';transform:scaleX(0.950);">Initialize</div>
<div class="t" style="left:65.5px;top:312.19px;font-size:8.6px;color:#222;font-weight:normal;font-family:'Liberation Sans';transform:scaleX(0.846);">OK</div>
<div class="t" style="left:119.5px;top:312.19px;font-size:8.6px;color:#222;font-weight:normal;font-family:'Liberation Sans';transform:scaleX(0.860);">Cancel</div>
<div class="t" style="left:182px;top:312.19px;font-size:8.6px;color:#222;font-weight:normal;font-family:'Liberation Sans';transform:scaleX(0.930);">Apply</div>
<div class="t" style="left:263px;top:660.69px;font-size:8.6px;color:#333;font-weight:normal;font-family:'Liberation Sans';transform:scaleX(0.817);">Messages</div>
<div class="t" style="left:264.5px;top:672.69px;font-size:8.6px;color:#3c9a3c;font-weight:normal;font-family:'Liberation Sans';transform:scaleX(1.017);">Info:</div>
<div class="t" style="left:284px;top:672.69px;font-size:8.6px;color:#2a2a2a;font-weight:normal;font-family:'Liberation Sans';transform:scaleX(0.889);">Saved all entities and settings to file C:/Documents and Settings/Rick/My Documents/My Grids/PWI/Wenny/F6-Project/DLRF6.pw</div>
<div class="t" style="left:264.5px;top:682.69px;font-size:8.6px;color:#3c9a3c;font-weight:normal;font-family:'Liberation Sans';transform:scaleX(1.017);">Info:</div>
<div class="t" style="left:284px;top:682.69px;font-size:8.6px;color:#2a2a2a;font-weight:normal;font-family:'Liberation Sans';transform:scaleX(0.889);">Saved all entities and settings to file C:/Documents and Settings/Rick/My Documents/My Grids/PWI/Wenny/F6-Project/DLRF6.pw</div>
<div class="t" style="left:264.5px;top:692.69px;font-size:8.6px;color:#3c9a3c;font-weight:normal;font-family:'Liberation Sans';transform:scaleX(1.017);">Info:</div>
<div class="t" style="left:284px;top:692.69px;font-size:8.6px;color:#2a2a2a;font-weight:normal;font-family:'Liberation Sans';transform:scaleX(0.890);">Loaded entities and settings from file C:/Documents and Settings/Rick/My Documents/My Grids/Demos/Aachen Turbine/RotorStatorRotor.pw</div>
<div class="t" style="left:134px;top:711.92px;font-size:9.5px;color:#1a1a1a;font-weight:bold;font-family:'Liberation Sans';transform:scaleX(0.906);">3D</div>
<div class="t" style="left:165.5px;top:712.69px;font-size:8.6px;color:#333;font-weight:normal;font-family:'Liberation Sans';transform:scaleX(0.765);">CGNS</div>
</body></html>
